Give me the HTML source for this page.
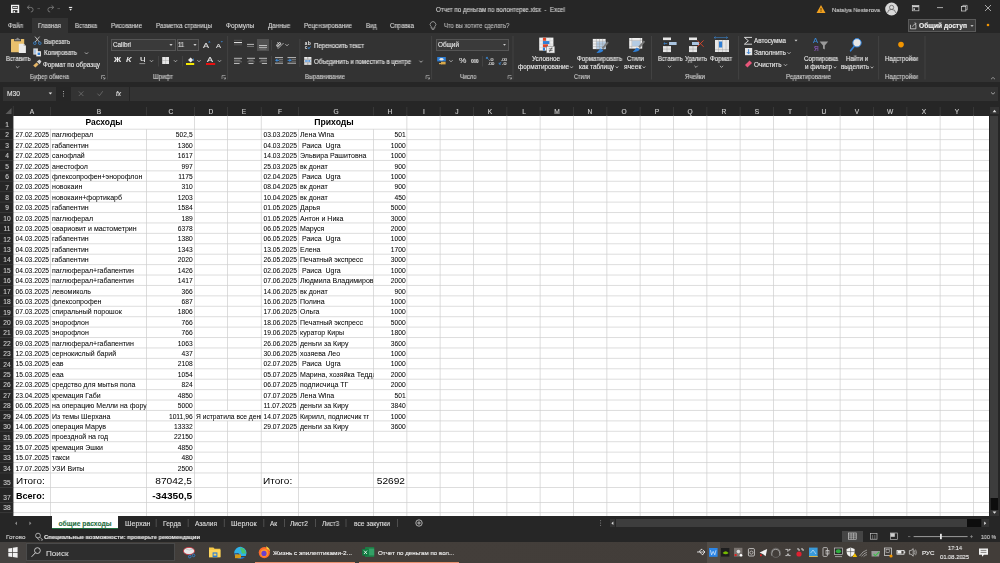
<!DOCTYPE html>
<html><head><meta charset="utf-8"><style>
html,body{margin:0;padding:0;width:1000px;height:563px;overflow:hidden;background:#262626;}
body{position:relative;font-family:"Liberation Sans",sans-serif;}
.t{position:absolute;white-space:nowrap;line-height:1em;}
.g{-webkit-text-stroke:0.04px #000;}
.u{will-change:transform;-webkit-text-stroke:0.12px currentColor;}
.gg{-webkit-text-stroke:0.1px #1e6e3e;}
</style></head><body>
<div style="position:absolute;left:0px;top:0px;width:1000px;height:33px;background:#262626;"></div>
<div style="position:absolute;left:32px;top:18px;width:36px;height:15px;background:#333333;"></div>
<div style="position:absolute;left:0px;top:33px;width:1000px;height:48.7px;background:#333333;"></div>
<div style="position:absolute;left:0px;top:81.7px;width:1000px;height:35px;background:#262626;"></div>
<div class="t u" id="t1" style="top:23px;font-size:6.4px;color:#d6d6d6;left:8px;transform:scaleX(0.9543);transform-origin:left;">Файл</div>
<div class="t u" id="t2" style="top:23px;font-size:6.4px;color:#d6d6d6;left:38px;transform:scaleX(0.9454);transform-origin:left;">Главная</div>
<div class="t u" id="t3" style="top:23px;font-size:6.4px;color:#d6d6d6;left:75px;transform:scaleX(0.9257);transform-origin:left;">Вставка</div>
<div class="t u" id="t4" style="top:23px;font-size:6.4px;color:#d6d6d6;left:111px;transform:scaleX(0.9631);transform-origin:left;">Рисование</div>
<div class="t u" id="t5" style="top:23px;font-size:6.4px;color:#d6d6d6;left:155.6px;transform:scaleX(0.9623);transform-origin:left;">Разметка страницы</div>
<div class="t u" id="t6" style="top:23px;font-size:6.4px;color:#d6d6d6;left:225.7px;transform:scaleX(1.0175);transform-origin:left;">Формулы</div>
<div class="t u" id="t7" style="top:23px;font-size:6.4px;color:#d6d6d6;left:267.6px;transform:scaleX(0.9700);transform-origin:left;">Данные</div>
<div class="t u" id="t8" style="top:23px;font-size:6.4px;color:#d6d6d6;left:304px;transform:scaleX(0.9725);transform-origin:left;">Рецензирование</div>
<div class="t u" id="t9" style="top:23px;font-size:6.4px;color:#d6d6d6;left:365.6px;transform:scaleX(0.9341);transform-origin:left;">Вид</div>
<div class="t u" id="t10" style="top:23px;font-size:6.4px;color:#d6d6d6;left:390px;transform:scaleX(0.9570);transform-origin:left;">Справка</div>
<div class="t u" id="t11" style="top:23px;font-size:6.4px;color:#bdbdbd;left:443.6px;transform:scaleX(0.9256);transform-origin:left;">Что вы хотите сделать?</div>
<div class="t u" id="t12" style="top:7px;font-size:6.4px;color:#d6d6d6;left:435.6px;transform:scaleX(0.9572);transform-origin:left;white-space:pre;">Отчет по деньгам по волонтерке.xlsx  -  Excel</div>
<div class="t u" id="t13" style="top:7px;font-size:6.0px;color:#cfcfcf;left:832px;transform:scaleX(0.9725);transform-origin:left;">Natalya Nesterova</div>
<div style="position:absolute;left:2.6px;top:87px;width:53.4px;height:14px;background:#333333;"></div>
<div class="t u" id="t14" style="top:91px;font-size:6.4px;color:#e0e0e0;left:7px;transform:scaleX(1.0452);transform-origin:left;">M30</div>
<div style="position:absolute;left:71px;top:87px;width:57.6px;height:14px;background:#333333;"></div>
<div style="position:absolute;left:130px;top:87px;width:867.5px;height:14px;background:#333333;"></div>
<div style="position:absolute;left:908px;top:19px;width:68px;height:13px;background:#3b3b3b;box-sizing:border-box;border:0.6px solid #5a5a5a;"></div>
<div class="t u" id="t15" style="top:23px;font-size:6.6px;color:#f2f2f2;font-weight:700;left:919px;transform:scaleX(1.0095);transform-origin:left;">Общий доступ</div>
<div class="t u" id="t16" style="top:56px;font-size:6.3px;color:#e8e8e8;left:5.7px;transform:scaleX(0.9175);transform-origin:left;">Вставить</div>
<div class="t u" id="t17" style="top:39px;font-size:6.3px;color:#e8e8e8;left:44px;transform:scaleX(0.9281);transform-origin:left;">Вырезать</div>
<div class="t u" id="t18" style="top:50px;font-size:6.3px;color:#e8e8e8;left:44px;transform:scaleX(0.9733);transform-origin:left;">Копировать</div>
<div class="t u" id="t19" style="top:62px;font-size:6.3px;color:#e8e8e8;left:43px;transform:scaleX(1.0094);transform-origin:left;">Формат по образцу</div>
<div class="t u" id="t20" style="top:74px;font-size:6.3px;color:#cfcfcf;left:30px;transform:scaleX(0.9113);transform-origin:left;">Буфер обмена</div>
<div style="position:absolute;left:111px;top:39px;width:64.6px;height:11.8px;background:#3a3a3a;box-sizing:border-box;border:0.6px solid #555;"></div>
<div class="t u" id="t21" style="top:42px;font-size:6.3px;color:#e8e8e8;left:113px;transform:scaleX(1.0079);transform-origin:left;">Calibri</div>
<div style="position:absolute;left:176.5px;top:39px;width:22.5px;height:11.8px;background:#3a3a3a;box-sizing:border-box;border:0.6px solid #555;"></div>
<div class="t u" id="t22" style="top:42px;font-size:6.3px;color:#e8e8e8;left:178px;transform:scaleX(0.9165);transform-origin:left;">11</div>
<div class="t u" id="t23" style="top:42px;font-size:7.4px;color:#e0e0e0;left:203px;transform:scaleX(1.2152);transform-origin:left;">A</div>
<div class="t u" id="t24" style="top:44px;font-size:5.8px;color:#e0e0e0;left:216px;transform:scaleX(1.2903);transform-origin:left;">A</div>
<div class="t u" id="t25" style="top:57px;font-size:6.8px;color:#f0f0f0;font-weight:700;left:113.5px;transform:scaleX(1.1371);transform-origin:left;">Ж</div>
<div class="t u" id="t26" style="top:57px;font-size:6.8px;color:#f0f0f0;left:126px;transform:scaleX(1.3696);transform-origin:left;font-style:italic;">К</div>
<div class="t u" id="t27" style="top:57px;font-size:6.8px;color:#f0f0f0;left:139.5px;transform:scaleX(1.2138);transform-origin:left;">Ч</div>
<div class="t u" id="t28" style="top:57px;font-size:6.4px;color:#e6e6e6;left:207px;transform:scaleX(1.4066);transform-origin:left;">A</div>
<div class="t u" id="t29" style="top:74px;font-size:6.3px;color:#cfcfcf;left:153px;transform:scaleX(0.9653);transform-origin:left;">Шрифт</div>
<div style="position:absolute;left:257px;top:39px;width:12.2px;height:12px;background:#505050;"></div>
<div class="t u" id="t30" style="top:43px;font-size:6.3px;color:#e8e8e8;left:314px;transform:scaleX(0.9659);transform-origin:left;">Переносить текст</div>
<div class="t u" id="t31" style="top:59px;font-size:6.3px;color:#e8e8e8;left:314px;transform:scaleX(0.9635);transform-origin:left;">Объединить и поместить в центре</div>
<div class="t u" id="t32" style="top:74px;font-size:6.3px;color:#cfcfcf;left:305px;transform:scaleX(0.9229);transform-origin:left;">Выравнивание</div>
<div style="position:absolute;left:436.2px;top:39px;width:72.8px;height:11.8px;background:#3a3a3a;box-sizing:border-box;border:0.6px solid #555;"></div>
<div class="t u" id="t33" style="top:42px;font-size:6.3px;color:#e8e8e8;left:438px;transform:scaleX(1.0128);transform-origin:left;">Общий</div>
<div class="t u" id="t34" style="top:57px;font-size:7.0px;color:#dcdcdc;left:459px;transform:scaleX(1.1870);transform-origin:left;">%</div>
<div class="t u" id="t35" style="top:59px;font-size:5.2px;color:#dcdcdc;font-weight:700;left:470.6px;transform:scaleX(0.8780);transform-origin:left;">000</div>
<div class="t u" id="t36" style="top:58px;font-size:4.2px;color:#dcdcdc;left:489px;transform:scaleX(1.2857);transform-origin:left;">.0</div>
<div class="t u" id="t37" style="top:62px;font-size:4.2px;color:#dcdcdc;left:488px;transform:scaleX(1.0981);transform-origin:left;">.00</div>
<div class="t u" id="t38" style="top:58px;font-size:4.2px;color:#dcdcdc;left:501px;transform:scaleX(1.0295);transform-origin:left;">.00</div>
<div class="t u" id="t39" style="top:62px;font-size:4.2px;color:#dcdcdc;left:501.8px;transform:scaleX(1.2857);transform-origin:left;">.0</div>
<div class="t u" id="t40" style="top:74px;font-size:6.3px;color:#cfcfcf;left:460px;transform:scaleX(0.9103);transform-origin:left;">Число</div>
<div class="t u" id="t41" style="top:56px;font-size:6.3px;color:#e8e8e8;left:532px;transform:scaleX(1.0067);transform-origin:left;">Условное</div>
<div class="t u" id="t42" style="top:64px;font-size:6.3px;color:#e8e8e8;left:518px;transform:scaleX(1.0087);transform-origin:left;">форматирование</div>
<div class="t u" id="t43" style="top:56px;font-size:6.3px;color:#e8e8e8;left:577px;transform:scaleX(0.9846);transform-origin:left;">Форматировать</div>
<div class="t u" id="t44" style="top:64px;font-size:6.3px;color:#e8e8e8;left:579px;transform:scaleX(1.0145);transform-origin:left;">как таблицу</div>
<div class="t u" id="t45" style="top:56px;font-size:6.3px;color:#e8e8e8;left:627px;transform:scaleX(0.9371);transform-origin:left;">Стили</div>
<div class="t u" id="t46" style="top:64px;font-size:6.3px;color:#e8e8e8;left:624px;transform:scaleX(1.0636);transform-origin:left;">ячеек</div>
<div class="t u" id="t47" style="top:74px;font-size:6.3px;color:#cfcfcf;left:574px;transform:scaleX(0.8820);transform-origin:left;">Стили</div>
<div class="t u" id="t48" style="top:56px;font-size:6.3px;color:#e8e8e8;left:657.5px;transform:scaleX(0.9175);transform-origin:left;">Вставить</div>
<div class="t u" id="t49" style="top:56px;font-size:6.3px;color:#e8e8e8;left:685px;transform:scaleX(0.9149);transform-origin:left;">Удалить</div>
<div class="t u" id="t50" style="top:56px;font-size:6.3px;color:#e8e8e8;left:710px;transform:scaleX(0.9832);transform-origin:left;">Формат</div>
<div class="t u" id="t51" style="top:74px;font-size:6.3px;color:#cfcfcf;left:685px;transform:scaleX(0.9467);transform-origin:left;">Ячейки</div>
<div class="t u" id="t52" style="top:38px;font-size:6.3px;color:#e8e8e8;left:754px;transform:scaleX(0.9966);transform-origin:left;">Автосумма</div>
<div class="t u" id="t53" style="top:50px;font-size:6.3px;color:#e8e8e8;left:754px;transform:scaleX(1.0349);transform-origin:left;">Заполнить</div>
<div class="t u" id="t54" style="top:62px;font-size:6.3px;color:#e8e8e8;left:754px;transform:scaleX(1.0028);transform-origin:left;">Очистить</div>
<div class="t u" id="t55" style="top:38px;font-size:6.8px;color:#3b8ad8;left:813px;transform:scaleX(1.0997);transform-origin:left;">А</div>
<div class="t u" id="t56" style="top:46px;font-size:6.8px;color:#9b5fcf;left:814px;transform:scaleX(0.8940);transform-origin:left;">Я</div>
<div class="t u" id="t57" style="top:56px;font-size:6.3px;color:#e8e8e8;left:804px;transform:scaleX(0.9837);transform-origin:left;">Сортировка</div>
<div class="t u" id="t58" style="top:64px;font-size:6.3px;color:#e8e8e8;left:805px;transform:scaleX(1.0064);transform-origin:left;">и фильтр</div>
<div class="t u" id="t59" style="top:56px;font-size:6.3px;color:#e8e8e8;left:846px;transform:scaleX(0.9462);transform-origin:left;">Найти и</div>
<div class="t u" id="t60" style="top:64px;font-size:6.3px;color:#e8e8e8;left:841px;transform:scaleX(0.9928);transform-origin:left;">выделить</div>
<div class="t u" id="t61" style="top:74px;font-size:6.3px;color:#cfcfcf;left:786px;transform:scaleX(0.9381);transform-origin:left;">Редактирование</div>
<div class="t u" id="t62" style="top:56px;font-size:6.3px;color:#e8e8e8;left:885px;transform:scaleX(0.9548);transform-origin:left;">Надстройки</div>
<div class="t u" id="t63" style="top:74px;font-size:6.3px;color:#cfcfcf;left:885px;transform:scaleX(0.9548);transform-origin:left;">Надстройки</div>
<div class="t u" id="t64" style="top:91px;font-size:6.4px;color:#e0e0e0;left:116px;transform:scaleX(1.0031);transform-origin:left;font-style:italic;font-family:"Liberation Serif",serif;">fx</div>
<div style="position:absolute;left:0px;top:106px;width:989.2px;height:9.6px;background:#262626;"></div>
<div style="position:absolute;left:0px;top:115.6px;width:13.3px;height:400.4px;background:#262626;"></div>
<div style="position:absolute;left:13.3px;top:115.6px;width:975.9000000000001px;height:400.4px;background:#ffffff;"></div>
<svg style="position:absolute;left:0px;top:0px;" width="1000" height="563" viewBox="0 0 1000 563"><g stroke="#cfcfcf" stroke-width="0.7"><line x1="50.5" y1="129.2" x2="50.5" y2="516"/><line x1="146.5" y1="129.2" x2="146.5" y2="516"/><line x1="194.5" y1="115.6" x2="194.5" y2="516"/><line x1="227.5" y1="115.6" x2="227.5" y2="410.46"/><line x1="227.5" y1="420.88" x2="227.5" y2="516"/><line x1="261.3" y1="115.6" x2="261.3" y2="516"/><line x1="298.5" y1="129.2" x2="298.5" y2="516"/><line x1="373.5" y1="129.2" x2="373.5" y2="516"/><line x1="406.83" y1="115.6" x2="406.83" y2="516"/><line x1="440.17" y1="115.6" x2="440.17" y2="516"/><line x1="473.5" y1="115.6" x2="473.5" y2="516"/><line x1="506.83" y1="115.6" x2="506.83" y2="516"/><line x1="540.16" y1="115.6" x2="540.16" y2="516"/><line x1="573.5" y1="115.6" x2="573.5" y2="516"/><line x1="606.83" y1="115.6" x2="606.83" y2="516"/><line x1="640.16" y1="115.6" x2="640.16" y2="516"/><line x1="673.5" y1="115.6" x2="673.5" y2="516"/><line x1="706.83" y1="115.6" x2="706.83" y2="516"/><line x1="740.16" y1="115.6" x2="740.16" y2="516"/><line x1="773.5" y1="115.6" x2="773.5" y2="516"/><line x1="806.83" y1="115.6" x2="806.83" y2="516"/><line x1="840.16" y1="115.6" x2="840.16" y2="516"/><line x1="873.49" y1="115.6" x2="873.49" y2="516"/><line x1="906.83" y1="115.6" x2="906.83" y2="516"/><line x1="940.16" y1="115.6" x2="940.16" y2="516"/><line x1="973.49" y1="115.6" x2="973.49" y2="516"/><line x1="13.3" y1="129.2" x2="989.2" y2="129.2"/><line x1="13.3" y1="139.62" x2="989.2" y2="139.62"/><line x1="13.3" y1="150.03" x2="989.2" y2="150.03"/><line x1="13.3" y1="160.45" x2="989.2" y2="160.45"/><line x1="13.3" y1="170.87" x2="989.2" y2="170.87"/><line x1="13.3" y1="181.28" x2="989.2" y2="181.28"/><line x1="13.3" y1="191.7" x2="989.2" y2="191.7"/><line x1="13.3" y1="202.12" x2="989.2" y2="202.12"/><line x1="13.3" y1="212.54" x2="989.2" y2="212.54"/><line x1="13.3" y1="222.95" x2="989.2" y2="222.95"/><line x1="13.3" y1="233.37" x2="989.2" y2="233.37"/><line x1="13.3" y1="243.79" x2="989.2" y2="243.79"/><line x1="13.3" y1="254.2" x2="989.2" y2="254.2"/><line x1="13.3" y1="264.62" x2="989.2" y2="264.62"/><line x1="13.3" y1="275.04" x2="989.2" y2="275.04"/><line x1="13.3" y1="285.45" x2="989.2" y2="285.45"/><line x1="13.3" y1="295.87" x2="989.2" y2="295.87"/><line x1="13.3" y1="306.29" x2="989.2" y2="306.29"/><line x1="13.3" y1="316.71" x2="989.2" y2="316.71"/><line x1="13.3" y1="327.12" x2="989.2" y2="327.12"/><line x1="13.3" y1="337.54" x2="989.2" y2="337.54"/><line x1="13.3" y1="347.96" x2="989.2" y2="347.96"/><line x1="13.3" y1="358.37" x2="989.2" y2="358.37"/><line x1="13.3" y1="368.79" x2="989.2" y2="368.79"/><line x1="13.3" y1="379.21" x2="989.2" y2="379.21"/><line x1="13.3" y1="389.62" x2="989.2" y2="389.62"/><line x1="13.3" y1="400.04" x2="989.2" y2="400.04"/><line x1="13.3" y1="410.46" x2="989.2" y2="410.46"/><line x1="13.3" y1="420.88" x2="989.2" y2="420.88"/><line x1="13.3" y1="431.29" x2="989.2" y2="431.29"/><line x1="13.3" y1="441.71" x2="989.2" y2="441.71"/><line x1="13.3" y1="452.13" x2="989.2" y2="452.13"/><line x1="13.3" y1="462.54" x2="989.2" y2="462.54"/><line x1="13.3" y1="472.96" x2="989.2" y2="472.96"/><line x1="13.3" y1="487.5" x2="989.2" y2="487.5"/><line x1="13.3" y1="502.5" x2="989.2" y2="502.5"/><line x1="13.3" y1="512.6" x2="989.2" y2="512.6"/></g></svg>
<svg style="position:absolute;left:0px;top:0px;" width="1000" height="563" viewBox="0 0 1000 563"><g stroke="#444" stroke-width="0.6"><line x1="50.5" y1="107" x2="50.5" y2="115.6"/><line x1="146.5" y1="107" x2="146.5" y2="115.6"/><line x1="194.5" y1="107" x2="194.5" y2="115.6"/><line x1="227.5" y1="107" x2="227.5" y2="115.6"/><line x1="261.3" y1="107" x2="261.3" y2="115.6"/><line x1="298.5" y1="107" x2="298.5" y2="115.6"/><line x1="373.5" y1="107" x2="373.5" y2="115.6"/><line x1="406.83" y1="107" x2="406.83" y2="115.6"/><line x1="440.17" y1="107" x2="440.17" y2="115.6"/><line x1="473.5" y1="107" x2="473.5" y2="115.6"/><line x1="506.83" y1="107" x2="506.83" y2="115.6"/><line x1="540.16" y1="107" x2="540.16" y2="115.6"/><line x1="573.5" y1="107" x2="573.5" y2="115.6"/><line x1="606.83" y1="107" x2="606.83" y2="115.6"/><line x1="640.16" y1="107" x2="640.16" y2="115.6"/><line x1="673.5" y1="107" x2="673.5" y2="115.6"/><line x1="706.83" y1="107" x2="706.83" y2="115.6"/><line x1="740.16" y1="107" x2="740.16" y2="115.6"/><line x1="773.5" y1="107" x2="773.5" y2="115.6"/><line x1="806.83" y1="107" x2="806.83" y2="115.6"/><line x1="840.16" y1="107" x2="840.16" y2="115.6"/><line x1="873.49" y1="107" x2="873.49" y2="115.6"/><line x1="906.83" y1="107" x2="906.83" y2="115.6"/><line x1="940.16" y1="107" x2="940.16" y2="115.6"/><line x1="973.49" y1="107" x2="973.49" y2="115.6"/><line x1="0" y1="129.2" x2="13.3" y2="129.2"/><line x1="0" y1="139.62" x2="13.3" y2="139.62"/><line x1="0" y1="150.03" x2="13.3" y2="150.03"/><line x1="0" y1="160.45" x2="13.3" y2="160.45"/><line x1="0" y1="170.87" x2="13.3" y2="170.87"/><line x1="0" y1="181.28" x2="13.3" y2="181.28"/><line x1="0" y1="191.7" x2="13.3" y2="191.7"/><line x1="0" y1="202.12" x2="13.3" y2="202.12"/><line x1="0" y1="212.54" x2="13.3" y2="212.54"/><line x1="0" y1="222.95" x2="13.3" y2="222.95"/><line x1="0" y1="233.37" x2="13.3" y2="233.37"/><line x1="0" y1="243.79" x2="13.3" y2="243.79"/><line x1="0" y1="254.2" x2="13.3" y2="254.2"/><line x1="0" y1="264.62" x2="13.3" y2="264.62"/><line x1="0" y1="275.04" x2="13.3" y2="275.04"/><line x1="0" y1="285.45" x2="13.3" y2="285.45"/><line x1="0" y1="295.87" x2="13.3" y2="295.87"/><line x1="0" y1="306.29" x2="13.3" y2="306.29"/><line x1="0" y1="316.71" x2="13.3" y2="316.71"/><line x1="0" y1="327.12" x2="13.3" y2="327.12"/><line x1="0" y1="337.54" x2="13.3" y2="337.54"/><line x1="0" y1="347.96" x2="13.3" y2="347.96"/><line x1="0" y1="358.37" x2="13.3" y2="358.37"/><line x1="0" y1="368.79" x2="13.3" y2="368.79"/><line x1="0" y1="379.21" x2="13.3" y2="379.21"/><line x1="0" y1="389.62" x2="13.3" y2="389.62"/><line x1="0" y1="400.04" x2="13.3" y2="400.04"/><line x1="0" y1="410.46" x2="13.3" y2="410.46"/><line x1="0" y1="420.88" x2="13.3" y2="420.88"/><line x1="0" y1="431.29" x2="13.3" y2="431.29"/><line x1="0" y1="441.71" x2="13.3" y2="441.71"/><line x1="0" y1="452.13" x2="13.3" y2="452.13"/><line x1="0" y1="462.54" x2="13.3" y2="462.54"/><line x1="0" y1="472.96" x2="13.3" y2="472.96"/><line x1="0" y1="487.5" x2="13.3" y2="487.5"/><line x1="0" y1="502.5" x2="13.3" y2="502.5"/><line x1="0" y1="512.6" x2="13.3" y2="512.6"/><line x1="13.3" y1="106" x2="13.3" y2="516"/></g></svg>
<svg style="position:absolute;left:0px;top:0px;" width="14" height="116" viewBox="0 0 14 116"><path d="M11.5 108 L11.5 114 L5.5 114 Z" fill="#5a5a5a"/></svg>
<div class="t u" id="t65" style="top:109px;font-size:6.6px;color:#cfcfcf;left:31.90px;transform:translateX(-50%) ;">A</div>
<div class="t u" id="t66" style="top:109px;font-size:6.6px;color:#cfcfcf;left:98.50px;transform:translateX(-50%) ;">B</div>
<div class="t u" id="t67" style="top:109px;font-size:6.6px;color:#cfcfcf;left:170.50px;transform:translateX(-50%) ;">C</div>
<div class="t u" id="t68" style="top:109px;font-size:6.6px;color:#cfcfcf;left:211.00px;transform:translateX(-50%) ;">D</div>
<div class="t u" id="t69" style="top:109px;font-size:6.6px;color:#cfcfcf;left:244.40px;transform:translateX(-50%) ;">E</div>
<div class="t u" id="t70" style="top:109px;font-size:6.6px;color:#cfcfcf;left:279.90px;transform:translateX(-50%) ;">F</div>
<div class="t u" id="t71" style="top:109px;font-size:6.6px;color:#cfcfcf;left:336.00px;transform:translateX(-50%) ;">G</div>
<div class="t u" id="t72" style="top:109px;font-size:6.6px;color:#cfcfcf;left:390.16px;transform:translateX(-50%) ;">H</div>
<div class="t u" id="t73" style="top:109px;font-size:6.6px;color:#cfcfcf;left:423.50px;transform:translateX(-50%) ;">I</div>
<div class="t u" id="t74" style="top:109px;font-size:6.6px;color:#cfcfcf;left:456.84px;transform:translateX(-50%) ;">J</div>
<div class="t u" id="t75" style="top:109px;font-size:6.6px;color:#cfcfcf;left:490.16px;transform:translateX(-50%) ;">K</div>
<div class="t u" id="t76" style="top:109px;font-size:6.6px;color:#cfcfcf;left:523.50px;transform:translateX(-50%) ;">L</div>
<div class="t u" id="t77" style="top:109px;font-size:6.6px;color:#cfcfcf;left:556.83px;transform:translateX(-50%) ;">M</div>
<div class="t u" id="t78" style="top:109px;font-size:6.6px;color:#cfcfcf;left:590.16px;transform:translateX(-50%) ;">N</div>
<div class="t u" id="t79" style="top:109px;font-size:6.6px;color:#cfcfcf;left:623.50px;transform:translateX(-50%) ;">O</div>
<div class="t u" id="t80" style="top:109px;font-size:6.6px;color:#cfcfcf;left:656.83px;transform:translateX(-50%) ;">P</div>
<div class="t u" id="t81" style="top:109px;font-size:6.6px;color:#cfcfcf;left:690.16px;transform:translateX(-50%) ;">Q</div>
<div class="t u" id="t82" style="top:109px;font-size:6.6px;color:#cfcfcf;left:723.50px;transform:translateX(-50%) ;">R</div>
<div class="t u" id="t83" style="top:109px;font-size:6.6px;color:#cfcfcf;left:756.83px;transform:translateX(-50%) ;">S</div>
<div class="t u" id="t84" style="top:109px;font-size:6.6px;color:#cfcfcf;left:790.16px;transform:translateX(-50%) ;">T</div>
<div class="t u" id="t85" style="top:109px;font-size:6.6px;color:#cfcfcf;left:823.50px;transform:translateX(-50%) ;">U</div>
<div class="t u" id="t86" style="top:109px;font-size:6.6px;color:#cfcfcf;left:856.83px;transform:translateX(-50%) ;">V</div>
<div class="t u" id="t87" style="top:109px;font-size:6.6px;color:#cfcfcf;left:890.16px;transform:translateX(-50%) ;">W</div>
<div class="t u" id="t88" style="top:109px;font-size:6.6px;color:#cfcfcf;left:923.50px;transform:translateX(-50%) ;">X</div>
<div class="t u" id="t89" style="top:109px;font-size:6.6px;color:#cfcfcf;left:956.83px;transform:translateX(-50%) ;">Y</div>
<div class="t u" id="t90" style="top:122px;font-size:6.6px;color:#c8c8c8;left:6.70px;transform:translateX(-50%) ;">1</div>
<div class="t u" id="t91" style="top:132px;font-size:6.6px;color:#c8c8c8;left:6.70px;transform:translateX(-50%) ;">2</div>
<div class="t u" id="t92" style="top:143px;font-size:6.6px;color:#c8c8c8;left:6.70px;transform:translateX(-50%) ;">3</div>
<div class="t u" id="t93" style="top:153px;font-size:6.6px;color:#c8c8c8;left:6.70px;transform:translateX(-50%) ;">4</div>
<div class="t u" id="t94" style="top:164px;font-size:6.6px;color:#c8c8c8;left:6.70px;transform:translateX(-50%) ;">5</div>
<div class="t u" id="t95" style="top:174px;font-size:6.6px;color:#c8c8c8;left:6.70px;transform:translateX(-50%) ;">6</div>
<div class="t u" id="t96" style="top:185px;font-size:6.6px;color:#c8c8c8;left:6.70px;transform:translateX(-50%) ;">7</div>
<div class="t u" id="t97" style="top:195px;font-size:6.6px;color:#c8c8c8;left:6.70px;transform:translateX(-50%) ;">8</div>
<div class="t u" id="t98" style="top:205px;font-size:6.6px;color:#c8c8c8;left:6.70px;transform:translateX(-50%) ;">9</div>
<div class="t u" id="t99" style="top:216px;font-size:6.6px;color:#c8c8c8;left:6.70px;transform:translateX(-50%) ;">10</div>
<div class="t u" id="t100" style="top:226px;font-size:6.6px;color:#c8c8c8;left:6.70px;transform:translateX(-50%) ;">11</div>
<div class="t u" id="t101" style="top:237px;font-size:6.6px;color:#c8c8c8;left:6.70px;transform:translateX(-50%) ;">12</div>
<div class="t u" id="t102" style="top:247px;font-size:6.6px;color:#c8c8c8;left:6.70px;transform:translateX(-50%) ;">13</div>
<div class="t u" id="t103" style="top:257px;font-size:6.6px;color:#c8c8c8;left:6.70px;transform:translateX(-50%) ;">14</div>
<div class="t u" id="t104" style="top:268px;font-size:6.6px;color:#c8c8c8;left:6.70px;transform:translateX(-50%) ;">15</div>
<div class="t u" id="t105" style="top:278px;font-size:6.6px;color:#c8c8c8;left:6.70px;transform:translateX(-50%) ;">16</div>
<div class="t u" id="t106" style="top:289px;font-size:6.6px;color:#c8c8c8;left:6.70px;transform:translateX(-50%) ;">17</div>
<div class="t u" id="t107" style="top:299px;font-size:6.6px;color:#c8c8c8;left:6.70px;transform:translateX(-50%) ;">18</div>
<div class="t u" id="t108" style="top:310px;font-size:6.6px;color:#c8c8c8;left:6.70px;transform:translateX(-50%) ;">19</div>
<div class="t u" id="t109" style="top:320px;font-size:6.6px;color:#c8c8c8;left:6.70px;transform:translateX(-50%) ;">20</div>
<div class="t u" id="t110" style="top:330px;font-size:6.6px;color:#c8c8c8;left:6.70px;transform:translateX(-50%) ;">21</div>
<div class="t u" id="t111" style="top:341px;font-size:6.6px;color:#c8c8c8;left:6.70px;transform:translateX(-50%) ;">22</div>
<div class="t u" id="t112" style="top:351px;font-size:6.6px;color:#c8c8c8;left:6.70px;transform:translateX(-50%) ;">23</div>
<div class="t u" id="t113" style="top:362px;font-size:6.6px;color:#c8c8c8;left:6.70px;transform:translateX(-50%) ;">24</div>
<div class="t u" id="t114" style="top:372px;font-size:6.6px;color:#c8c8c8;left:6.70px;transform:translateX(-50%) ;">25</div>
<div class="t u" id="t115" style="top:382px;font-size:6.6px;color:#c8c8c8;left:6.70px;transform:translateX(-50%) ;">26</div>
<div class="t u" id="t116" style="top:393px;font-size:6.6px;color:#c8c8c8;left:6.70px;transform:translateX(-50%) ;">27</div>
<div class="t u" id="t117" style="top:403px;font-size:6.6px;color:#c8c8c8;left:6.70px;transform:translateX(-50%) ;">28</div>
<div class="t u" id="t118" style="top:414px;font-size:6.6px;color:#c8c8c8;left:6.70px;transform:translateX(-50%) ;">29</div>
<div class="t u" id="t119" style="top:424px;font-size:6.6px;color:#c8c8c8;left:6.70px;transform:translateX(-50%) ;">30</div>
<div class="t u" id="t120" style="top:435px;font-size:6.6px;color:#c8c8c8;left:6.70px;transform:translateX(-50%) ;">31</div>
<div class="t u" id="t121" style="top:445px;font-size:6.6px;color:#c8c8c8;left:6.70px;transform:translateX(-50%) ;">32</div>
<div class="t u" id="t122" style="top:455px;font-size:6.6px;color:#c8c8c8;left:6.70px;transform:translateX(-50%) ;">33</div>
<div class="t u" id="t123" style="top:466px;font-size:6.6px;color:#c8c8c8;left:6.70px;transform:translateX(-50%) ;">34</div>
<div class="t u" id="t124" style="top:480px;font-size:6.6px;color:#c8c8c8;left:6.70px;transform:translateX(-50%) ;">35</div>
<div class="t u" id="t125" style="top:495px;font-size:6.6px;color:#c8c8c8;left:6.70px;transform:translateX(-50%) ;">37</div>
<div class="t u" id="t126" style="top:505px;font-size:6.6px;color:#c8c8c8;left:6.70px;transform:translateX(-50%) ;">38</div>
<div class="t u" id="t127" style="top:516px;font-size:6.6px;color:#c8c8c8;left:6.70px;transform:translateX(-50%) ;">39</div>
<div class="t g" id="t128" style="top:132px;font-size:6.7px;color:#000;left:15.6px;">27.02.2025</div>
<div class="t g" id="t129" style="top:132px;font-size:6.7px;color:#000;left:52px;transform:scaleX(1.05);transform-origin:left;">паглюферал</div>
<div class="t g" id="t130" style="top:132px;font-size:6.7px;color:#000;right:807.40px;">502,5</div>
<div class="t g" id="t131" style="top:143px;font-size:6.7px;color:#000;left:15.6px;">27.02.2025</div>
<div class="t g" id="t132" style="top:143px;font-size:6.7px;color:#000;left:52px;transform:scaleX(1.05);transform-origin:left;">габапентин</div>
<div class="t g" id="t133" style="top:143px;font-size:6.7px;color:#000;right:807.40px;">1360</div>
<div class="t g" id="t134" style="top:153px;font-size:6.7px;color:#000;left:15.6px;">27.02.2025</div>
<div class="t g" id="t135" style="top:153px;font-size:6.7px;color:#000;left:52px;transform:scaleX(1.05);transform-origin:left;">санофлай</div>
<div class="t g" id="t136" style="top:153px;font-size:6.7px;color:#000;right:807.40px;">1617</div>
<div class="t g" id="t137" style="top:164px;font-size:6.7px;color:#000;left:15.6px;">27.02.2025</div>
<div class="t g" id="t138" style="top:164px;font-size:6.7px;color:#000;left:52px;transform:scaleX(1.05);transform-origin:left;">анестофол</div>
<div class="t g" id="t139" style="top:164px;font-size:6.7px;color:#000;right:807.40px;">997</div>
<div class="t g" id="t140" style="top:174px;font-size:6.7px;color:#000;left:15.6px;">02.03.2025</div>
<div class="t g" id="t141" style="top:174px;font-size:6.7px;color:#000;left:52px;transform:scaleX(1.05);transform-origin:left;">флексопрофен+энорофлон</div>
<div class="t g" id="t142" style="top:174px;font-size:6.7px;color:#000;right:807.40px;">1175</div>
<div class="t g" id="t143" style="top:184px;font-size:6.7px;color:#000;left:15.6px;">02.03.2025</div>
<div class="t g" id="t144" style="top:184px;font-size:6.7px;color:#000;left:52px;transform:scaleX(1.05);transform-origin:left;">новокаин</div>
<div class="t g" id="t145" style="top:184px;font-size:6.7px;color:#000;right:807.40px;">310</div>
<div class="t g" id="t146" style="top:195px;font-size:6.7px;color:#000;left:15.6px;">02.03.2025</div>
<div class="t g" id="t147" style="top:195px;font-size:6.7px;color:#000;left:52px;transform:scaleX(1.05);transform-origin:left;">новокаин+фортикарб</div>
<div class="t g" id="t148" style="top:195px;font-size:6.7px;color:#000;right:807.40px;">1203</div>
<div class="t g" id="t149" style="top:205px;font-size:6.7px;color:#000;left:15.6px;">02.03.2025</div>
<div class="t g" id="t150" style="top:205px;font-size:6.7px;color:#000;left:52px;transform:scaleX(1.05);transform-origin:left;">габапентин</div>
<div class="t g" id="t151" style="top:205px;font-size:6.7px;color:#000;right:807.40px;">1584</div>
<div class="t g" id="t152" style="top:216px;font-size:6.7px;color:#000;left:15.6px;">02.03.2025</div>
<div class="t g" id="t153" style="top:216px;font-size:6.7px;color:#000;left:52px;transform:scaleX(1.05);transform-origin:left;">паглюферал</div>
<div class="t g" id="t154" style="top:216px;font-size:6.7px;color:#000;right:807.40px;">189</div>
<div class="t g" id="t155" style="top:226px;font-size:6.7px;color:#000;left:15.6px;">02.03.2025</div>
<div class="t g" id="t156" style="top:226px;font-size:6.7px;color:#000;left:52px;transform:scaleX(1.05);transform-origin:left;">овариовит и мастометрин</div>
<div class="t g" id="t157" style="top:226px;font-size:6.7px;color:#000;right:807.40px;">6378</div>
<div class="t g" id="t158" style="top:236px;font-size:6.7px;color:#000;left:15.6px;">04.03.2025</div>
<div class="t g" id="t159" style="top:236px;font-size:6.7px;color:#000;left:52px;transform:scaleX(1.05);transform-origin:left;">габапентин</div>
<div class="t g" id="t160" style="top:236px;font-size:6.7px;color:#000;right:807.40px;">1380</div>
<div class="t g" id="t161" style="top:247px;font-size:6.7px;color:#000;left:15.6px;">04.03.2025</div>
<div class="t g" id="t162" style="top:247px;font-size:6.7px;color:#000;left:52px;transform:scaleX(1.05);transform-origin:left;">габапентин</div>
<div class="t g" id="t163" style="top:247px;font-size:6.7px;color:#000;right:807.40px;">1343</div>
<div class="t g" id="t164" style="top:257px;font-size:6.7px;color:#000;left:15.6px;">04.03.2025</div>
<div class="t g" id="t165" style="top:257px;font-size:6.7px;color:#000;left:52px;transform:scaleX(1.05);transform-origin:left;">габапентин</div>
<div class="t g" id="t166" style="top:257px;font-size:6.7px;color:#000;right:807.40px;">2020</div>
<div class="t g" id="t167" style="top:268px;font-size:6.7px;color:#000;left:15.6px;">04.03.2025</div>
<div class="t g" id="t168" style="top:268px;font-size:6.7px;color:#000;left:52px;transform:scaleX(1.05);transform-origin:left;">паглюферал+габапентин</div>
<div class="t g" id="t169" style="top:268px;font-size:6.7px;color:#000;right:807.40px;">1426</div>
<div class="t g" id="t170" style="top:278px;font-size:6.7px;color:#000;left:15.6px;">04.03.2025</div>
<div class="t g" id="t171" style="top:278px;font-size:6.7px;color:#000;left:52px;transform:scaleX(1.05);transform-origin:left;">паглюферал+габапентин</div>
<div class="t g" id="t172" style="top:278px;font-size:6.7px;color:#000;right:807.40px;">1417</div>
<div class="t g" id="t173" style="top:289px;font-size:6.7px;color:#000;left:15.6px;">06.03.2025</div>
<div class="t g" id="t174" style="top:289px;font-size:6.7px;color:#000;left:52px;transform:scaleX(1.05);transform-origin:left;">левомиколь</div>
<div class="t g" id="t175" style="top:289px;font-size:6.7px;color:#000;right:807.40px;">366</div>
<div class="t g" id="t176" style="top:299px;font-size:6.7px;color:#000;left:15.6px;">06.03.2025</div>
<div class="t g" id="t177" style="top:299px;font-size:6.7px;color:#000;left:52px;transform:scaleX(1.05);transform-origin:left;">флексопрофен</div>
<div class="t g" id="t178" style="top:299px;font-size:6.7px;color:#000;right:807.40px;">687</div>
<div class="t g" id="t179" style="top:309px;font-size:6.7px;color:#000;left:15.6px;">07.03.2025</div>
<div class="t g" id="t180" style="top:309px;font-size:6.7px;color:#000;left:52px;transform:scaleX(1.05);transform-origin:left;">спиральный порошок</div>
<div class="t g" id="t181" style="top:309px;font-size:6.7px;color:#000;right:807.40px;">1806</div>
<div class="t g" id="t182" style="top:320px;font-size:6.7px;color:#000;left:15.6px;">09.03.2025</div>
<div class="t g" id="t183" style="top:320px;font-size:6.7px;color:#000;left:52px;transform:scaleX(1.05);transform-origin:left;">энорофлон</div>
<div class="t g" id="t184" style="top:320px;font-size:6.7px;color:#000;right:807.40px;">766</div>
<div class="t g" id="t185" style="top:330px;font-size:6.7px;color:#000;left:15.6px;">09.03.2025</div>
<div class="t g" id="t186" style="top:330px;font-size:6.7px;color:#000;left:52px;transform:scaleX(1.05);transform-origin:left;">энорофлон</div>
<div class="t g" id="t187" style="top:330px;font-size:6.7px;color:#000;right:807.40px;">766</div>
<div class="t g" id="t188" style="top:341px;font-size:6.7px;color:#000;left:15.6px;">09.03.2025</div>
<div class="t g" id="t189" style="top:341px;font-size:6.7px;color:#000;left:52px;transform:scaleX(1.05);transform-origin:left;">паглюферал+габапентин</div>
<div class="t g" id="t190" style="top:341px;font-size:6.7px;color:#000;right:807.40px;">1063</div>
<div class="t g" id="t191" style="top:351px;font-size:6.7px;color:#000;left:15.6px;">12.03.2025</div>
<div class="t g" id="t192" style="top:351px;font-size:6.7px;color:#000;left:52px;transform:scaleX(1.05);transform-origin:left;">сернокислый барий</div>
<div class="t g" id="t193" style="top:351px;font-size:6.7px;color:#000;right:807.40px;">437</div>
<div class="t g" id="t194" style="top:361px;font-size:6.7px;color:#000;left:15.6px;">15.03.2025</div>
<div class="t g" id="t195" style="top:361px;font-size:6.7px;color:#000;left:52px;transform:scaleX(1.05);transform-origin:left;">еав</div>
<div class="t g" id="t196" style="top:361px;font-size:6.7px;color:#000;right:807.40px;">2108</div>
<div class="t g" id="t197" style="top:372px;font-size:6.7px;color:#000;left:15.6px;">15.03.2025</div>
<div class="t g" id="t198" style="top:372px;font-size:6.7px;color:#000;left:52px;transform:scaleX(1.05);transform-origin:left;">еаа</div>
<div class="t g" id="t199" style="top:372px;font-size:6.7px;color:#000;right:807.40px;">1054</div>
<div class="t g" id="t200" style="top:382px;font-size:6.7px;color:#000;left:15.6px;">22.03.2025</div>
<div class="t g" id="t201" style="top:382px;font-size:6.7px;color:#000;left:52px;transform:scaleX(1.05);transform-origin:left;">средство для мытья пола</div>
<div class="t g" id="t202" style="top:382px;font-size:6.7px;color:#000;right:807.40px;">824</div>
<div class="t g" id="t203" style="top:393px;font-size:6.7px;color:#000;left:15.6px;">23.04.2025</div>
<div class="t g" id="t204" style="top:393px;font-size:6.7px;color:#000;left:52px;transform:scaleX(1.05);transform-origin:left;">кремация Габи</div>
<div class="t g" id="t205" style="top:393px;font-size:6.7px;color:#000;right:807.40px;">4850</div>
<div class="t g" id="t206" style="top:403px;font-size:6.7px;color:#000;left:15.6px;">06.05.2025</div>
<div class="t g" id="t207" style="top:403px;font-size:6.7px;color:#000;left:52px;width:90.00px;overflow:hidden;transform:scaleX(1.05);transform-origin:left;">на операцию Мелли на форум</div>
<div class="t g" id="t208" style="top:403px;font-size:6.7px;color:#000;right:807.40px;">5000</div>
<div class="t g" id="t209" style="top:414px;font-size:6.7px;color:#000;left:15.6px;">24.05.2025</div>
<div class="t g" id="t210" style="top:414px;font-size:6.7px;color:#000;left:52px;transform:scaleX(1.05);transform-origin:left;">Из темы Шерхана</div>
<div class="t g" id="t211" style="top:414px;font-size:6.7px;color:#000;right:807.40px;">1011,96</div>
<div class="t g" id="t212" style="top:424px;font-size:6.7px;color:#000;left:15.6px;">14.06.2025</div>
<div class="t g" id="t213" style="top:424px;font-size:6.7px;color:#000;left:52px;transform:scaleX(1.05);transform-origin:left;">операция Марув</div>
<div class="t g" id="t214" style="top:424px;font-size:6.7px;color:#000;right:807.40px;">13332</div>
<div class="t g" id="t215" style="top:434px;font-size:6.7px;color:#000;left:15.6px;">29.05.2025</div>
<div class="t g" id="t216" style="top:434px;font-size:6.7px;color:#000;left:52px;transform:scaleX(1.05);transform-origin:left;">проездной на год</div>
<div class="t g" id="t217" style="top:434px;font-size:6.7px;color:#000;right:807.40px;">22150</div>
<div class="t g" id="t218" style="top:445px;font-size:6.7px;color:#000;left:15.6px;">15.07.2025</div>
<div class="t g" id="t219" style="top:445px;font-size:6.7px;color:#000;left:52px;transform:scaleX(1.05);transform-origin:left;">кремация Эшки</div>
<div class="t g" id="t220" style="top:445px;font-size:6.7px;color:#000;right:807.40px;">4850</div>
<div class="t g" id="t221" style="top:455px;font-size:6.7px;color:#000;left:15.6px;">15.07.2025</div>
<div class="t g" id="t222" style="top:455px;font-size:6.7px;color:#000;left:52px;transform:scaleX(1.05);transform-origin:left;">такси</div>
<div class="t g" id="t223" style="top:455px;font-size:6.7px;color:#000;right:807.40px;">480</div>
<div class="t g" id="t224" style="top:466px;font-size:6.7px;color:#000;left:15.6px;">17.07.2025</div>
<div class="t g" id="t225" style="top:466px;font-size:6.7px;color:#000;left:52px;transform:scaleX(1.05);transform-origin:left;">УЗИ Виты</div>
<div class="t g" id="t226" style="top:466px;font-size:6.7px;color:#000;right:807.40px;">2500</div>
<div class="t g" id="t227" style="top:132px;font-size:6.7px;color:#000;left:263.5px;">03.03.2025</div>
<div class="t g" id="t228" style="top:132px;font-size:6.7px;color:#000;left:299.6px;width:69.5px;overflow:hidden;white-space:pre;transform:scaleX(1.05);transform-origin:left;">Лена Wina</div>
<div class="t g" id="t229" style="top:132px;font-size:6.7px;color:#000;right:594.40px;">501</div>
<div class="t g" id="t230" style="top:143px;font-size:6.7px;color:#000;left:263.5px;">04.03.2025</div>
<div class="t g" id="t231" style="top:143px;font-size:6.7px;color:#000;left:299.6px;width:69.5px;overflow:hidden;white-space:pre;transform:scaleX(1.05);transform-origin:left;"> Раиса  Ugra</div>
<div class="t g" id="t232" style="top:143px;font-size:6.7px;color:#000;right:594.40px;">1000</div>
<div class="t g" id="t233" style="top:153px;font-size:6.7px;color:#000;left:263.5px;">14.03.2025</div>
<div class="t g" id="t234" style="top:153px;font-size:6.7px;color:#000;left:299.6px;width:69.5px;overflow:hidden;white-space:pre;transform:scaleX(1.05);transform-origin:left;">Эльвира Рашитовна</div>
<div class="t g" id="t235" style="top:153px;font-size:6.7px;color:#000;right:594.40px;">1000</div>
<div class="t g" id="t236" style="top:164px;font-size:6.7px;color:#000;left:263.5px;">25.03.2025</div>
<div class="t g" id="t237" style="top:164px;font-size:6.7px;color:#000;left:299.6px;width:69.5px;overflow:hidden;white-space:pre;transform:scaleX(1.05);transform-origin:left;">вк донат</div>
<div class="t g" id="t238" style="top:164px;font-size:6.7px;color:#000;right:594.40px;">900</div>
<div class="t g" id="t239" style="top:174px;font-size:6.7px;color:#000;left:263.5px;">02.04.2025</div>
<div class="t g" id="t240" style="top:174px;font-size:6.7px;color:#000;left:299.6px;width:69.5px;overflow:hidden;white-space:pre;transform:scaleX(1.05);transform-origin:left;"> Раиса  Ugra</div>
<div class="t g" id="t241" style="top:174px;font-size:6.7px;color:#000;right:594.40px;">1000</div>
<div class="t g" id="t242" style="top:184px;font-size:6.7px;color:#000;left:263.5px;">08.04.2025</div>
<div class="t g" id="t243" style="top:184px;font-size:6.7px;color:#000;left:299.6px;width:69.5px;overflow:hidden;white-space:pre;transform:scaleX(1.05);transform-origin:left;">вк донат</div>
<div class="t g" id="t244" style="top:184px;font-size:6.7px;color:#000;right:594.40px;">900</div>
<div class="t g" id="t245" style="top:195px;font-size:6.7px;color:#000;left:263.5px;">10.04.2025</div>
<div class="t g" id="t246" style="top:195px;font-size:6.7px;color:#000;left:299.6px;width:69.5px;overflow:hidden;white-space:pre;transform:scaleX(1.05);transform-origin:left;">вк донат</div>
<div class="t g" id="t247" style="top:195px;font-size:6.7px;color:#000;right:594.40px;">450</div>
<div class="t g" id="t248" style="top:205px;font-size:6.7px;color:#000;left:263.5px;">01.05.2025</div>
<div class="t g" id="t249" style="top:205px;font-size:6.7px;color:#000;left:299.6px;width:69.5px;overflow:hidden;white-space:pre;transform:scaleX(1.05);transform-origin:left;">Дарья</div>
<div class="t g" id="t250" style="top:205px;font-size:6.7px;color:#000;right:594.40px;">5000</div>
<div class="t g" id="t251" style="top:216px;font-size:6.7px;color:#000;left:263.5px;">01.05.2025</div>
<div class="t g" id="t252" style="top:216px;font-size:6.7px;color:#000;left:299.6px;width:69.5px;overflow:hidden;white-space:pre;transform:scaleX(1.05);transform-origin:left;">Антон и Ника</div>
<div class="t g" id="t253" style="top:216px;font-size:6.7px;color:#000;right:594.40px;">3000</div>
<div class="t g" id="t254" style="top:226px;font-size:6.7px;color:#000;left:263.5px;">06.05.2025</div>
<div class="t g" id="t255" style="top:226px;font-size:6.7px;color:#000;left:299.6px;width:69.5px;overflow:hidden;white-space:pre;transform:scaleX(1.05);transform-origin:left;">Маруся</div>
<div class="t g" id="t256" style="top:226px;font-size:6.7px;color:#000;right:594.40px;">2000</div>
<div class="t g" id="t257" style="top:236px;font-size:6.7px;color:#000;left:263.5px;">06.05.2025</div>
<div class="t g" id="t258" style="top:236px;font-size:6.7px;color:#000;left:299.6px;width:69.5px;overflow:hidden;white-space:pre;transform:scaleX(1.05);transform-origin:left;"> Раиса  Ugra</div>
<div class="t g" id="t259" style="top:236px;font-size:6.7px;color:#000;right:594.40px;">1000</div>
<div class="t g" id="t260" style="top:247px;font-size:6.7px;color:#000;left:263.5px;">13.05.2025</div>
<div class="t g" id="t261" style="top:247px;font-size:6.7px;color:#000;left:299.6px;width:69.5px;overflow:hidden;white-space:pre;transform:scaleX(1.05);transform-origin:left;">Елена</div>
<div class="t g" id="t262" style="top:247px;font-size:6.7px;color:#000;right:594.40px;">1700</div>
<div class="t g" id="t263" style="top:257px;font-size:6.7px;color:#000;left:263.5px;">26.05.2025</div>
<div class="t g" id="t264" style="top:257px;font-size:6.7px;color:#000;left:299.6px;width:69.5px;overflow:hidden;white-space:pre;transform:scaleX(1.05);transform-origin:left;">Печатный экспресс</div>
<div class="t g" id="t265" style="top:257px;font-size:6.7px;color:#000;right:594.40px;">3000</div>
<div class="t g" id="t266" style="top:268px;font-size:6.7px;color:#000;left:263.5px;">02.06.2025</div>
<div class="t g" id="t267" style="top:268px;font-size:6.7px;color:#000;left:299.6px;width:69.5px;overflow:hidden;white-space:pre;transform:scaleX(1.05);transform-origin:left;"> Раиса  Ugra</div>
<div class="t g" id="t268" style="top:268px;font-size:6.7px;color:#000;right:594.40px;">1000</div>
<div class="t g" id="t269" style="top:278px;font-size:6.7px;color:#000;left:263.5px;">07.06.2025</div>
<div class="t g" id="t270" style="top:278px;font-size:6.7px;color:#000;left:299.6px;width:69.5px;overflow:hidden;white-space:pre;transform:scaleX(1.05);transform-origin:left;">Людмила Владимировна</div>
<div class="t g" id="t271" style="top:278px;font-size:6.7px;color:#000;right:594.40px;">2000</div>
<div class="t g" id="t272" style="top:289px;font-size:6.7px;color:#000;left:263.5px;">14.06.2025</div>
<div class="t g" id="t273" style="top:289px;font-size:6.7px;color:#000;left:299.6px;width:69.5px;overflow:hidden;white-space:pre;transform:scaleX(1.05);transform-origin:left;">вк донат</div>
<div class="t g" id="t274" style="top:289px;font-size:6.7px;color:#000;right:594.40px;">900</div>
<div class="t g" id="t275" style="top:299px;font-size:6.7px;color:#000;left:263.5px;">16.06.2025</div>
<div class="t g" id="t276" style="top:299px;font-size:6.7px;color:#000;left:299.6px;width:69.5px;overflow:hidden;white-space:pre;transform:scaleX(1.05);transform-origin:left;">Полина</div>
<div class="t g" id="t277" style="top:299px;font-size:6.7px;color:#000;right:594.40px;">1000</div>
<div class="t g" id="t278" style="top:309px;font-size:6.7px;color:#000;left:263.5px;">17.06.2025</div>
<div class="t g" id="t279" style="top:309px;font-size:6.7px;color:#000;left:299.6px;width:69.5px;overflow:hidden;white-space:pre;transform:scaleX(1.05);transform-origin:left;">Ольга</div>
<div class="t g" id="t280" style="top:309px;font-size:6.7px;color:#000;right:594.40px;">1000</div>
<div class="t g" id="t281" style="top:320px;font-size:6.7px;color:#000;left:263.5px;">18.06.2025</div>
<div class="t g" id="t282" style="top:320px;font-size:6.7px;color:#000;left:299.6px;width:69.5px;overflow:hidden;white-space:pre;transform:scaleX(1.05);transform-origin:left;">Печатный экспресс</div>
<div class="t g" id="t283" style="top:320px;font-size:6.7px;color:#000;right:594.40px;">5000</div>
<div class="t g" id="t284" style="top:330px;font-size:6.7px;color:#000;left:263.5px;">19.06.2025</div>
<div class="t g" id="t285" style="top:330px;font-size:6.7px;color:#000;left:299.6px;width:69.5px;overflow:hidden;white-space:pre;transform:scaleX(1.05);transform-origin:left;">куратор Киры</div>
<div class="t g" id="t286" style="top:330px;font-size:6.7px;color:#000;right:594.40px;">1800</div>
<div class="t g" id="t287" style="top:341px;font-size:6.7px;color:#000;left:263.5px;">26.06.2025</div>
<div class="t g" id="t288" style="top:341px;font-size:6.7px;color:#000;left:299.6px;width:69.5px;overflow:hidden;white-space:pre;transform:scaleX(1.05);transform-origin:left;">деньги за Киру</div>
<div class="t g" id="t289" style="top:341px;font-size:6.7px;color:#000;right:594.40px;">3600</div>
<div class="t g" id="t290" style="top:351px;font-size:6.7px;color:#000;left:263.5px;">30.06.2025</div>
<div class="t g" id="t291" style="top:351px;font-size:6.7px;color:#000;left:299.6px;width:69.5px;overflow:hidden;white-space:pre;transform:scaleX(1.05);transform-origin:left;">хозяева Лео</div>
<div class="t g" id="t292" style="top:351px;font-size:6.7px;color:#000;right:594.40px;">1000</div>
<div class="t g" id="t293" style="top:361px;font-size:6.7px;color:#000;left:263.5px;">02.07.2025</div>
<div class="t g" id="t294" style="top:361px;font-size:6.7px;color:#000;left:299.6px;width:69.5px;overflow:hidden;white-space:pre;transform:scaleX(1.05);transform-origin:left;"> Раиса  Ugra</div>
<div class="t g" id="t295" style="top:361px;font-size:6.7px;color:#000;right:594.40px;">1000</div>
<div class="t g" id="t296" style="top:372px;font-size:6.7px;color:#000;left:263.5px;">05.07.2025</div>
<div class="t g" id="t297" style="top:372px;font-size:6.7px;color:#000;left:299.6px;width:69.5px;overflow:hidden;white-space:pre;transform:scaleX(1.05);transform-origin:left;">Марина, хозяйка Тедди</div>
<div class="t g" id="t298" style="top:372px;font-size:6.7px;color:#000;right:594.40px;">2000</div>
<div class="t g" id="t299" style="top:382px;font-size:6.7px;color:#000;left:263.5px;">06.07.2025</div>
<div class="t g" id="t300" style="top:382px;font-size:6.7px;color:#000;left:299.6px;width:69.5px;overflow:hidden;white-space:pre;transform:scaleX(1.05);transform-origin:left;">подписчица ТГ</div>
<div class="t g" id="t301" style="top:382px;font-size:6.7px;color:#000;right:594.40px;">2000</div>
<div class="t g" id="t302" style="top:393px;font-size:6.7px;color:#000;left:263.5px;">07.07.2025</div>
<div class="t g" id="t303" style="top:393px;font-size:6.7px;color:#000;left:299.6px;width:69.5px;overflow:hidden;white-space:pre;transform:scaleX(1.05);transform-origin:left;">Лена Wina</div>
<div class="t g" id="t304" style="top:393px;font-size:6.7px;color:#000;right:594.40px;">501</div>
<div class="t g" id="t305" style="top:403px;font-size:6.7px;color:#000;left:263.5px;">11.07.2025</div>
<div class="t g" id="t306" style="top:403px;font-size:6.7px;color:#000;left:299.6px;width:69.5px;overflow:hidden;white-space:pre;transform:scaleX(1.05);transform-origin:left;">деньги за Киру</div>
<div class="t g" id="t307" style="top:403px;font-size:6.7px;color:#000;right:594.40px;">3840</div>
<div class="t g" id="t308" style="top:414px;font-size:6.7px;color:#000;left:263.5px;">14.07.2025</div>
<div class="t g" id="t309" style="top:414px;font-size:6.7px;color:#000;left:299.6px;width:69.5px;overflow:hidden;white-space:pre;transform:scaleX(1.05);transform-origin:left;">Кирилл, подписчик тг</div>
<div class="t g" id="t310" style="top:414px;font-size:6.7px;color:#000;right:594.40px;">1000</div>
<div class="t g" id="t311" style="top:424px;font-size:6.7px;color:#000;left:263.5px;">29.07.2025</div>
<div class="t g" id="t312" style="top:424px;font-size:6.7px;color:#000;left:299.6px;width:69.5px;overflow:hidden;white-space:pre;transform:scaleX(1.05);transform-origin:left;">деньги за Киру</div>
<div class="t g" id="t313" style="top:424px;font-size:6.7px;color:#000;right:594.40px;">3600</div>
<div class="t g" id="t314" style="top:414px;font-size:6.7px;color:#000;left:196px;width:65px;overflow:hidden;transform:scaleX(1.0);transform-origin:left;">Я истратила все деньги</div>
<div class="t " id="t315" style="top:117px;font-size:9.4px;color:#000;font-weight:700;left:103.90px;transform:translateX(-50%) scaleX(0.9028);transform-origin:center;">Расходы</div>
<div class="t " id="t316" style="top:117px;font-size:9.4px;color:#000;font-weight:700;left:334.00px;transform:translateX(-50%) scaleX(0.9233);transform-origin:center;">Приходы</div>
<div class="t " id="t317" style="top:476px;font-size:9.7px;color:#000;left:15.7px;transform:scaleX(1.0251);transform-origin:left;">Итого:</div>
<div class="t " id="t318" style="top:476px;font-size:9.7px;color:#000;right:807.60px;transform:scaleX(1.0505);transform-origin:right;">87042,5</div>
<div class="t " id="t319" style="top:491px;font-size:9.7px;color:#000;font-weight:700;left:15.7px;transform:scaleX(0.9342);transform-origin:left;">Всего:</div>
<div class="t " id="t320" style="top:491px;font-size:9.7px;color:#000;font-weight:700;right:807.60px;transform:scaleX(1.0458);transform-origin:right;">-34350,5</div>
<div class="t " id="t321" style="top:476px;font-size:9.7px;color:#000;left:263.3px;transform:scaleX(1.0394);transform-origin:left;">Итого:</div>
<div class="t " id="t322" style="top:476px;font-size:9.7px;color:#000;right:595.20px;transform:scaleX(1.0463);transform-origin:right;">52692</div>
<div style="position:absolute;left:0px;top:516px;width:1000px;height:13px;background:#262626;"></div>
<div style="position:absolute;left:989.2px;top:106px;width:10.8px;height:410px;background:#262626;"></div>
<div style="position:absolute;left:990.2px;top:115.5px;width:8.3px;height:382.5px;background:#3d3d3d;"></div>
<div style="position:absolute;left:990.6px;top:498px;width:7.6px;height:11.5px;background:#0d0d0d;"></div>
<div style="position:absolute;left:990.4px;top:107px;width:8.2px;height:7.4px;background:#333333;"></div>
<div style="position:absolute;left:990.4px;top:509.6px;width:8.2px;height:6.2px;background:#333333;"></div>
<div style="position:absolute;left:52px;top:516px;width:66px;height:12.5px;background:#ffffff;"></div>
<div style="position:absolute;left:52px;top:527.5px;width:66px;height:1.1px;background:#1e6e3e;"></div>
<div class="t gg" id="t323" style="top:521px;font-size:6.6px;color:#1e6e3e;font-weight:700;left:85.00px;transform:translateX(-50%) scaleX(1.0238);transform-origin:center;">общие расходы</div>
<div class="t u" id="t324" style="top:521px;font-size:6.4px;color:#dcdcdc;left:124.5px;transform:scaleX(1.1034);transform-origin:left;">Шерхан</div>
<div class="t u" id="t325" style="top:521px;font-size:6.4px;color:#dcdcdc;left:163px;transform:scaleX(1.0416);transform-origin:left;">Герда</div>
<div class="t u" id="t326" style="top:521px;font-size:6.4px;color:#dcdcdc;left:195px;transform:scaleX(1.0225);transform-origin:left;">Азалия</div>
<div class="t u" id="t327" style="top:521px;font-size:6.4px;color:#dcdcdc;left:230.5px;transform:scaleX(1.1132);transform-origin:left;">Шерлок</div>
<div class="t u" id="t328" style="top:521px;font-size:6.4px;color:#dcdcdc;left:270px;transform:scaleX(0.9912);transform-origin:left;">Ак</div>
<div class="t u" id="t329" style="top:521px;font-size:6.4px;color:#dcdcdc;left:290px;transform:scaleX(1.0313);transform-origin:left;">Лист2</div>
<div class="t u" id="t330" style="top:521px;font-size:6.4px;color:#dcdcdc;left:322px;transform:scaleX(0.9740);transform-origin:left;">Лист3</div>
<div class="t u" id="t331" style="top:521px;font-size:6.4px;color:#dcdcdc;left:354px;transform:scaleX(1.0516);transform-origin:left;">все закупки</div>
<div style="position:absolute;left:609.8px;top:518.6px;width:380px;height:9px;background:#262626;"></div>
<div style="position:absolute;left:615.6px;top:519.2px;width:351.4px;height:8px;background:#3d3d3d;"></div>
<div style="position:absolute;left:967px;top:519.2px;width:14px;height:8px;background:#0d0d0d;"></div>
<div style="position:absolute;left:609.8px;top:519.2px;width:5.6px;height:8px;background:#333333;"></div>
<div style="position:absolute;left:981.6px;top:519.2px;width:7.4px;height:8px;background:#333333;"></div>
<div style="position:absolute;left:0px;top:529px;width:1000px;height:12.6px;background:#262626;"></div>
<div class="t u" id="t332" style="top:534px;font-size:6.0px;color:#cfcfcf;left:5.5px;transform:scaleX(1.0523);transform-origin:left;">Готово</div>
<div class="t u" id="t333" style="top:534px;font-size:6.0px;color:#e8e8e8;font-weight:700;left:44px;transform:scaleX(0.9622);transform-origin:left;">Специальные возможности: проверьте рекомендации</div>
<div style="position:absolute;left:842px;top:530.6px;width:21.4px;height:11px;background:#454545;"></div>
<div class="t u" id="t334" style="top:534px;font-size:6.0px;color:#cfcfcf;left:981px;transform:scaleX(0.8815);transform-origin:left;">100 %</div>
<div style="position:absolute;left:0;top:541.6px;width:1000px;height:21.4px;background:linear-gradient(90deg,#403d3a 0%,#433e3a 40%,#423d39 100%)"></div>
<div style="position:absolute;left:0px;top:541.6px;width:25.6px;height:21.4px;background:#454240;"></div>
<div style="position:absolute;left:25.8px;top:542.8px;width:148.8px;height:18.6px;background:#2d2d2d;box-sizing:border-box;border:0.6px solid #4a4a4a;"></div>
<div class="t u" id="t335" style="top:550px;font-size:7.2px;color:#d6d6d6;left:45.5px;transform:scaleX(1.1294);transform-origin:left;">Поиск</div>
<div class="t u" id="t336" style="top:550px;font-size:6.2px;color:#f2f2f2;left:273px;transform:scaleX(1.0327);transform-origin:left;">Жизнь с эпилептиками-2...</div>
<div style="position:absolute;left:255px;top:561.6px;width:100px;height:1.4px;background:#e98f6d;"></div>
<div class="t u" id="t337" style="top:550px;font-size:6.2px;color:#f2f2f2;left:377.5px;transform:scaleX(0.9973);transform-origin:left;">Отчет по деньгам по вол...</div>
<div style="position:absolute;left:359px;top:561.6px;width:100px;height:1.4px;background:#e98f6d;"></div>
<div style="position:absolute;left:707px;top:541.6px;width:13px;height:21.4px;background:#524d48;"></div>
<div class="t u" id="t338" style="top:550px;font-size:6.2px;color:#f2f2f2;left:922px;transform:scaleX(1.0088);transform-origin:left;">РУС</div>
<div class="t u" id="t339" style="top:545px;font-size:6.2px;color:#f2f2f2;left:948px;transform:scaleX(0.9041);transform-origin:left;">17:14</div>
<div class="t u" id="t340" style="top:554px;font-size:6.2px;color:#f2f2f2;left:940px;transform:scaleX(0.9364);transform-origin:left;">01.08.2025</div>
<svg style="position:absolute;left:0;top:0" width="1000" height="563"><rect x="11" y="4.8" width="8.2" height="8.2" fill="#f2f2f2"/><rect x="12.4" y="6" width="5.4" height="2.8" fill="#262626"/><rect x="12.9" y="6.8" width="4.4" height="1.1" fill="#f2f2f2"/><rect x="12.8" y="10.2" width="4.6" height="2.4" fill="#262626"/><rect x="13.6" y="11" width="1.4" height="1.6" fill="#f2f2f2"/><path d="M27.4 7.4 h3.4 a2.3 2.3 0 0 1 0 4.6 M29.4 5.4 L27.2 7.4 L29.4 9.4" stroke="#7a7a7a" stroke-width="0.9" fill="none"/><line x1="37.4" y1="8.6" x2="40" y2="8.6" stroke="#6a6a6a" stroke-width="0.7"/><path d="M53.6 7.4 h-3.4 a2.3 2.3 0 0 0 0 4.6 M51.6 5.4 L53.8 7.4 L51.6 9.4" stroke="#7a7a7a" stroke-width="0.9" fill="none"/><line x1="57.4" y1="8.6" x2="60" y2="8.6" stroke="#6a6a6a" stroke-width="0.7"/><rect x="68.9" y="6.9" width="3.3" height="1.2" fill="#e6e6e6"/><path d="M69.3 9 h2.6 l-1.3 1.8z" fill="#e6e6e6"/><path d="M821 5 L825.5 13 L816.5 13 Z" fill="#f0a020"/><rect x="820.6" y="8" width="0.8" height="2.6" fill="#3a2a00"/><rect x="820.6" y="11.2" width="0.8" height="0.8" fill="#3a2a00"/><circle cx="891.6" cy="9" r="6.4" fill="#d9d9d9"/><circle cx="891.6" cy="7.4" r="2.1" fill="none" stroke="#555" stroke-width="0.7"/><path d="M887.6 12.8 a4 3.4 0 0 1 8 0" fill="none" stroke="#555" stroke-width="0.7"/><rect x="912.3" y="5.6" width="6.6" height="5.2" fill="none" stroke="#cfcfcf" stroke-width="0.7"/><rect x="912.3" y="5.6" width="6.6" height="1.6" fill="#cfcfcf"/><rect x="913.4" y="8.3" width="1.6" height="1.6" fill="#cfcfcf"/><line x1="937" y1="7.6" x2="943" y2="7.6" stroke="#e0e0e0" stroke-width="0.7"/><rect x="961.4" y="6.6" width="4.4" height="4.4" fill="none" stroke="#e0e0e0" stroke-width="0.7"/><path d="M962.8 6.6 v-1.2 h4.4 v4.4 h-1.4" fill="none" stroke="#e0e0e0" stroke-width="0.6"/><path d="M985 5 L991 11 M991 5 L985 11" stroke="#e0e0e0" stroke-width="0.7"/><path d="M910.5 24.8 v4 h5.4 v-4" fill="none" stroke="#e6e6e6" stroke-width="0.7"/><path d="M912.5 26.8 q1 -3 3.5 -3.2 M914.6 22.6 l1.6 1 l-1 1.5" fill="none" stroke="#e6e6e6" stroke-width="0.6"/><path d="M970.4 25.1 L973.6 25.1 L972 27.0 Z" fill="#bdbdbd"/><circle cx="988" cy="25" r="1.3" fill="#f29500"/><path d="M431.2 26.6 a2.8 2.8 0 1 1 3.6 0 v1.6 h-3.6 z M431.8 29.4 h2.4" fill="none" stroke="#d0d0d0" stroke-width="0.6"/><rect x="11" y="39" width="13.2" height="13.3" rx="0.6" fill="#e9c06d"/><rect x="14.2" y="38.6" width="6.8" height="2.6" fill="#333"/><path d="M14.8 40.6 h5.6 v-1.6 h-1.6 a1 1 0 0 0 -2.4 0 h-1.6 z" fill="#8a8a8a"/><path d="M18.8 43.7 h4.9 l2.2 2.2 v7 h-7.1 z" fill="#ececec"/><path d="M23.7 43.7 v2.2 h2.2" fill="#bdbdbd"/><path d="M15.9 66.3 L17.5 67.89999999999999 L19.1 66.3" stroke="#d0d0d0" stroke-width="0.75" fill="none"/><path d="M35 36.6 L39.4 42 M39.6 36.6 L35.2 42" stroke="#d9d9d9" stroke-width="0.8"/><circle cx="34.8" cy="43.2" r="1.3" fill="none" stroke="#3b8ad8" stroke-width="0.8"/><circle cx="39.8" cy="43.2" r="1.3" fill="none" stroke="#3b8ad8" stroke-width="0.8"/><rect x="33.3" y="48.4" width="4.6" height="6.2" fill="#dcdcdc"/><rect x="36.3" y="51.2" width="4.6" height="5.2" fill="#eeeeee"/><rect x="37.6" y="52.6" width="2.4" height="2.4" fill="#2f7fd6"/><rect x="34.3" y="49.6" width="1.4" height="4" fill="#8fb8e8"/><path d="M84.9 52.400000000000006 L86.5 54.0 L88.1 52.400000000000006" stroke="#d0d0d0" stroke-width="0.75" fill="none"/><path d="M33.2 65.6 L36.6 62.4 L38.6 64.4 L35.4 67.6 Z" fill="#e3b466"/><path d="M36.8 61.4 L39.6 59.6 L41.4 61.4 L39.6 64.2 Z" fill="#cfcfcf"/><path d="M101.5 79.0 L101.5 75.5 L105.0 75.5 M102.7 76.7 L105.0 79.0 M105.0 77.3 L105.0 79.0 L103.3 79.0" stroke="#bdbdbd" stroke-width="0.6" fill="none"/><line x1="107.5" y1="36" x2="107.5" y2="79.5" stroke="#4d4d4d" stroke-width="0.6"/><path d="M169.4 44.1 L172.6 44.1 L171 46.0 Z" fill="#cfcfcf"/><path d="M193.4 44.1 L196.6 44.1 L195 46.0 Z" fill="#cfcfcf"/><path d="M208 42.6 L209.3 41 L210.6 42.6 Z" fill="#3b8ad8"/><path d="M220.6 41.2 L223 41.2 L221.8 42.6 Z" fill="#3b8ad8"/><line x1="139.4" y1="63.6" x2="145.2" y2="63.6" stroke="#cfcfcf" stroke-width="0.6"/><path d="M149.9 60.2 L151.5 61.8 L153.1 60.2" stroke="#d0d0d0" stroke-width="0.75" fill="none"/><line x1="158.5" y1="56" x2="158.5" y2="66.5" stroke="#4d4d4d" stroke-width="0.6"/><rect x="162.2" y="57" width="6.8" height="7" fill="#e6e6e6"/><path d="M165.6 57 v7 M162.2 60.5 h6.8" stroke="#9a9a9a" stroke-width="0.4"/><path d="M173.9 60.2 L175.5 61.8 L177.1 60.2" stroke="#d0d0d0" stroke-width="0.75" fill="none"/><line x1="182.5" y1="56" x2="182.5" y2="66.5" stroke="#4d4d4d" stroke-width="0.6"/><path d="M188 60 l2.6 -2.6 l2.6 2.6 l-2.6 2.4 z" fill="#e6e6e6"/><path d="M193.4 58.6 v2.4" stroke="#3b8ad8" stroke-width="0.9"/><rect x="186" y="63" width="8.2" height="2" fill="#f4e800"/><path d="M197.4 60.2 L199 61.8 L200.6 60.2" stroke="#d0d0d0" stroke-width="0.75" fill="none"/><rect x="206" y="63" width="9.2" height="2" fill="#e81010"/><path d="M217.9 60.2 L219.5 61.8 L221.1 60.2" stroke="#d0d0d0" stroke-width="0.75" fill="none"/><path d="M222 79.0 L222 75.5 L225.5 75.5 M223.2 76.7 L225.5 79.0 M225.5 77.3 L225.5 79.0 L223.8 79.0" stroke="#bdbdbd" stroke-width="0.6" fill="none"/><line x1="227.6" y1="36" x2="227.6" y2="79.5" stroke="#4d4d4d" stroke-width="0.6"/><line x1="234" y1="40.3" x2="242" y2="40.3" stroke="#777" stroke-width="0.5"/><line x1="234" y1="42.6" x2="242" y2="42.6" stroke="#f0f0f0" stroke-width="1.0"/><line x1="234" y1="44.8" x2="242" y2="44.8" stroke="#777" stroke-width="0.5"/><line x1="247" y1="44.4" x2="254" y2="44.4" stroke="#dcdcdc" stroke-width="0.8"/><line x1="247" y1="46.4" x2="254" y2="46.4" stroke="#aaa" stroke-width="0.6"/><line x1="259" y1="45.5" x2="267" y2="45.5" stroke="#dcdcdc" stroke-width="0.8"/><line x1="259" y1="47.4" x2="267" y2="47.4" stroke="#cfcfcf" stroke-width="0.8"/><line x1="259.6" y1="49" x2="266.4" y2="49" stroke="#999" stroke-width="0.5"/><line x1="271.5" y1="40" x2="271.5" y2="50.5" stroke="#4d4d4d" stroke-width="0.6"/><g transform="rotate(-45 278.6 44)"><text x="275.2" y="45.8" font-size="5.2" font-weight="700" fill="#e6e6e6" font-family="Liberation Sans">ab</text></g><path d="M277.8 48.8 L283.6 43" stroke="#d8d8d8" stroke-width="0.7"/><path d="M285.4 44.2 L287 45.8 L288.6 44.2" stroke="#d0d0d0" stroke-width="0.75" fill="none"/><line x1="299.8" y1="39" x2="299.8" y2="67" stroke="#4d4d4d" stroke-width="0.6"/><text x="304.8" y="45" font-size="4.6" font-weight="700" fill="#e6e6e6" font-family="Liberation Sans">a</text><text x="307.8" y="44.8" font-size="5" font-weight="700" fill="#e6e6e6" font-family="Liberation Sans">b</text><text x="304.8" y="49" font-size="4.6" font-weight="700" fill="#e6e6e6" font-family="Liberation Sans">c</text><path d="M311 46.4 L308.4 48.4 M308.2 47 v1.6 h1.6" stroke="#3b8ad8" stroke-width="0.7" fill="none"/><line x1="234" y1="58.3" x2="242" y2="58.3" stroke="#dcdcdc" stroke-width="0.8"/><line x1="234" y1="60.2" x2="240.5" y2="60.2" stroke="#bbb" stroke-width="0.6"/><line x1="234" y1="61.8" x2="242" y2="61.8" stroke="#aaa" stroke-width="0.5"/><line x1="234" y1="63.5" x2="239.6" y2="63.5" stroke="#dcdcdc" stroke-width="0.8"/><line x1="247" y1="58.3" x2="255" y2="58.3" stroke="#dcdcdc" stroke-width="0.8"/><line x1="248.5" y1="60.2" x2="253.5" y2="60.2" stroke="#bbb" stroke-width="0.6"/><line x1="247.4" y1="61.8" x2="254.6" y2="61.8" stroke="#aaa" stroke-width="0.5"/><line x1="248.5" y1="63.5" x2="253.5" y2="63.5" stroke="#dcdcdc" stroke-width="0.8"/><line x1="259" y1="58.3" x2="267" y2="58.3" stroke="#dcdcdc" stroke-width="0.8"/><line x1="260.5" y1="60.2" x2="267" y2="60.2" stroke="#bbb" stroke-width="0.6"/><line x1="259.4" y1="61.8" x2="267" y2="61.8" stroke="#aaa" stroke-width="0.5"/><line x1="261.8" y1="63.5" x2="267" y2="63.5" stroke="#dcdcdc" stroke-width="0.8"/><line x1="271.5" y1="56" x2="271.5" y2="66.5" stroke="#4d4d4d" stroke-width="0.6"/><line x1="275" y1="57.6" x2="283" y2="57.6" stroke="#dcdcdc" stroke-width="0.8"/><line x1="279" y1="59.5" x2="283" y2="59.5" stroke="#999" stroke-width="0.6"/><line x1="279" y1="61.2" x2="283" y2="61.2" stroke="#999" stroke-width="0.6"/><line x1="275" y1="63.2" x2="283" y2="63.2" stroke="#dcdcdc" stroke-width="0.8"/><path d="M279.2 60.3 h-2.6" stroke="#3b8ad8" stroke-width="1.0"/><path d="M277.4 58.6 L275 60.3 L277.4 62 Z" fill="#3b8ad8"/><line x1="287.5" y1="57.6" x2="296" y2="57.6" stroke="#dcdcdc" stroke-width="0.8"/><line x1="291.5" y1="59.5" x2="296" y2="59.5" stroke="#999" stroke-width="0.6"/><line x1="291.5" y1="61.2" x2="296" y2="61.2" stroke="#999" stroke-width="0.6"/><line x1="287.5" y1="63.2" x2="296" y2="63.2" stroke="#dcdcdc" stroke-width="0.8"/><path d="M287.6 60.3 h2.6" stroke="#3b8ad8" stroke-width="1.0"/><path d="M289.4 58.6 L291.8 60.3 L289.4 62 Z" fill="#3b8ad8"/><rect x="304.2" y="57" width="7.2" height="7.8" fill="#eeeeee"/><path d="M304.2 59.2 h7.2 M304.2 62.8 h7.2 M307.8 57 v2.2 M307.8 62.8 v2" stroke="#555" stroke-width="0.45"/><path d="M305.4 61 h4.8" stroke="#2f7fd6" stroke-width="1.0"/><path d="M306.2 60 L305 61 L306.2 62 Z M309.4 60 L310.6 61 L309.4 62 Z" fill="#2f7fd6"/><path d="M419.4 60.7 L421 62.3 L422.6 60.7" stroke="#d0d0d0" stroke-width="0.75" fill="none"/><path d="M426 79.0 L426 75.5 L429.5 75.5 M427.2 76.7 L429.5 79.0 M429.5 77.3 L429.5 79.0 L427.8 79.0" stroke="#bdbdbd" stroke-width="0.6" fill="none"/><line x1="431.6" y1="36" x2="431.6" y2="79.5" stroke="#4d4d4d" stroke-width="0.6"/><path d="M503.1 43.9 L505.9 43.9 L504.5 45.8 Z" fill="#cfcfcf"/><rect x="437.2" y="57" width="8.6" height="4.4" fill="#2f7fd6"/><ellipse cx="441.5" cy="59.2" rx="2" ry="1.3" fill="#e6e6e6"/><rect x="441" y="61.8" width="4.6" height="2.6" fill="#d8a84a"/><rect x="439" y="63" width="3" height="1.2" fill="#d8a84a"/><path d="M449.4 60.2 L451 61.8 L452.6 60.2" stroke="#d0d0d0" stroke-width="0.75" fill="none"/><line x1="482.5" y1="56" x2="482.5" y2="66.5" stroke="#4d4d4d" stroke-width="0.6"/><path d="M486.6 57.4 L488.6 59.6 M486.4 59 v-1.6 h1.6" stroke="#3b8ad8" stroke-width="0.8" fill="none"/><path d="M501.4 61.8 L499.4 64 M499.2 62.6 v1.6 h1.6" stroke="#3b8ad8" stroke-width="0.8" fill="none"/><path d="M508 79.0 L508 75.5 L511.5 75.5 M509.2 76.7 L511.5 79.0 M511.5 77.3 L511.5 79.0 L509.8 79.0" stroke="#bdbdbd" stroke-width="0.6" fill="none"/><line x1="513" y1="36" x2="513" y2="79.5" stroke="#4d4d4d" stroke-width="0.6"/><rect x="539.2" y="37.6" width="14.2" height="13" fill="#f0f0f0"/><path d="M542.8 37.6 v13 M546.4 37.6 v13 M550 37.6 v13 M539.2 40.85 h14.2 M539.2 44.1 h14.2 M539.2 47.35 h14.2" stroke="#c0c0c0" stroke-width="0.4"/><rect x="543" y="37.8" width="3" height="3" fill="#e0462a"/><rect x="543" y="41.05" width="6.4" height="3" fill="#2f7fd6"/><rect x="543" y="44.3" width="5" height="3" fill="#e0462a"/><rect x="543" y="47.55" width="2" height="3" fill="#2f7fd6"/><rect x="546.6" y="46.2" width="8.2" height="6.8" fill="#eeeeee" stroke="#666" stroke-width="0.5"/><path d="M548.8 48.8 h3.8 M548.8 50.6 h3.8 M552 47.4 L549.4 52" stroke="#333" stroke-width="0.6"/><path d="M570.2 66.4 L571.5 68.0 L572.8 66.4" stroke="#d0d0d0" stroke-width="0.75" fill="none"/><rect x="592.8" y="38.9" width="12.8" height="10.2" fill="#f0f0f0"/><rect x="596.4" y="41.5" width="9.2" height="7.6" fill="#b4cce4"/><path d="M596.4 38.9 v10.2 M599.5 38.9 v10.2 M602.5999999999999 38.9 v10.2 M592.8 41.199999999999996 h12.8 M592.8 44.0 h12.8 M592.8 46.6 h12.8" stroke="#9a9a9a" stroke-width="0.45"/><path d="M608.0 42.1 L602.5999999999999 48.3" stroke="#7a7a7a" stroke-width="2.0"/><path d="M596.4 52.9 L600.4 48.5 L603.4 50.5 Q601.8 53.099999999999994 596.4 52.9 Z" fill="#2f7fd6"/><path d="M615.7 66.4 L617 68.0 L618.3 66.4" stroke="#d0d0d0" stroke-width="0.75" fill="none"/><rect x="629.2" y="38" width="13" height="10.6" fill="#f0f0f0"/><rect x="632.2" y="40.8" width="8" height="5.2" fill="#b4cce4"/><path d="M631.8000000000001 38 v10.6 M640.4000000000001 38 v10.6 M629.2 40.4 h13 M629.2 46.4 h13" stroke="#9a9a9a" stroke-width="0.45"/><path d="M644.4000000000001 41.2 L639.0 47.4" stroke="#7a7a7a" stroke-width="2.0"/><path d="M632.8000000000001 52 L636.8000000000001 47.6 L639.8000000000001 49.6 Q638.2 52.2 632.8000000000001 52 Z" fill="#2f7fd6"/><path d="M642.7 66.4 L644 68.0 L645.3 66.4" stroke="#d0d0d0" stroke-width="0.75" fill="none"/><line x1="651.5" y1="36" x2="651.5" y2="79.5" stroke="#4d4d4d" stroke-width="0.6"/><rect x="663" y="37.5" width="8" height="2.6" fill="#e6e6e6"/><rect x="663" y="46.1" width="8" height="6" fill="#e6e6e6"/><path d="M663 49.1 h8 M667 46.1 v6" stroke="#888" stroke-width="0.4"/><rect x="669" y="42" width="7.6" height="3" fill="#a9c4e0"/><path d="M667.2 43.5 h-3.4 M665 42.4 L663.8 43.5 L665 44.6" stroke="#3b8ad8" stroke-width="0.7" fill="none"/><path d="M667.9 65.8 L669.5 67.39999999999999 L671.1 65.8" stroke="#d0d0d0" stroke-width="0.75" fill="none"/><rect x="689" y="37.5" width="8" height="2.6" fill="#e6e6e6"/><rect x="689" y="46.1" width="8" height="6" fill="#e6e6e6"/><path d="M689 49.1 h8 M693 46.1 v6" stroke="#888" stroke-width="0.4"/><rect x="692" y="42" width="7" height="3" fill="#a9c4e0"/><path d="M697.2 40.4 L703.6 46.8 M703.6 40.4 L697.2 46.8" stroke="#e0462a" stroke-width="0.9"/><path d="M694.4 65.8 L696 67.39999999999999 L697.6 65.8" stroke="#d0d0d0" stroke-width="0.75" fill="none"/><path d="M714.2 37.6 h13.4 M715.6 36.5 L714.2 37.6 L715.6 38.7 M726.2 36.5 L727.6 37.6 L726.2 38.7" stroke="#3b8ad8" stroke-width="0.6" fill="none"/><rect x="715" y="40" width="14" height="12" fill="#e6e6e6"/><rect x="719" y="41.5" width="3.2" height="6" fill="#2f7fd6"/><path d="M718.5 40 v12 M722.5 40 v12 M726 40 v12 M715 49.6 h14" stroke="#999" stroke-width="0.4"/><path d="M719.9 65.8 L721.5 67.39999999999999 L723.1 65.8" stroke="#d0d0d0" stroke-width="0.75" fill="none"/><line x1="738.6" y1="36" x2="738.6" y2="79.5" stroke="#4d4d4d" stroke-width="0.6"/><path d="M752 37.4 h-7.6 l4 3.4 l-4 3.4 h7.6" fill="none" stroke="#e6e6e6" stroke-width="0.9"/><path d="M794.5 39.7 L797.5 39.7 L796 41.6 Z" fill="#cfcfcf"/><rect x="745" y="48" width="7.2" height="7.2" fill="#e6e6e6"/><path d="M748.6 49.2 v4.4 M746.8 52 L748.6 53.8 L750.4 52" stroke="#2f7fd6" stroke-width="0.9" fill="none"/><path d="M787.4 52.2 L789 53.8 L790.6 52.2" stroke="#d0d0d0" stroke-width="0.75" fill="none"/><path d="M745 65 L749.6 60.6 L752 63 L747.4 67.4 Z" fill="#e7567a"/><path d="M783.9 64.2 L785.5 65.8 L787.1 64.2" stroke="#d0d0d0" stroke-width="0.75" fill="none"/><path d="M819.6 41.6 h8.6 l-3.4 3.8 v4 l-1.8 -1 v-3 z" fill="#9a9a9a"/><path d="M833.7 66.60000000000001 L835 68.2 L836.3 66.60000000000001" stroke="#d0d0d0" stroke-width="0.75" fill="none"/><path d="M854 46.4 L850.6 50.8" stroke="#2f7fd6" stroke-width="1.6" stroke-linecap="round"/><circle cx="857" cy="42.8" r="4.2" fill="#e6e6e6" stroke="#2f7fd6" stroke-width="1.0"/><path d="M870.7 66.60000000000001 L872 68.2 L873.3 66.60000000000001" stroke="#d0d0d0" stroke-width="0.75" fill="none"/><line x1="878.6" y1="36" x2="878.6" y2="79.5" stroke="#4d4d4d" stroke-width="0.6"/><circle cx="901" cy="44.6" r="2.8" fill="#f29500"/><line x1="925" y1="36" x2="925" y2="79.5" stroke="#4d4d4d" stroke-width="0.6"/><path d="M991 79.2 L993 77.4 L995 79.2" stroke="#cfcfcf" stroke-width="0.6" fill="none"/><path d="M48.6 92.4 h3.6 l-1.8 2 z" fill="#e0e0e0"/><circle cx="63.5" cy="91.6" r="0.5" fill="#cfcfcf"/><circle cx="63.5" cy="93.8" r="0.5" fill="#cfcfcf"/><circle cx="63.5" cy="96" r="0.5" fill="#cfcfcf"/><path d="M78.8 91.4 L83.4 96 M83.4 91.4 L78.8 96" stroke="#707070" stroke-width="0.8"/><path d="M97.4 93.6 L99.4 95.8 L102.8 91.2" stroke="#707070" stroke-width="0.8" fill="none"/><path d="M991 92.4 L993 94.2 L995 92.4" stroke="#cfcfcf" stroke-width="0.7" fill="none"/><path d="M992.6 112.2 L994.5 109.8 L996.4 112.2 Z" fill="#e0e0e0"/><path d="M992.6 511.4 L994.5 513.8 L996.4 511.4 Z" fill="#e0e0e0"/><path d="M17 521.4 L15 523.3 L17 525.2 Z" fill="#8a8a8a"/><path d="M29.4 521.4 L31.4 523.3 L29.4 525.2 Z" fill="#8a8a8a"/><line x1="156.2" y1="519" x2="156.2" y2="527" stroke="#6a6a6a" stroke-width="0.6"/><line x1="188.2" y1="519" x2="188.2" y2="527" stroke="#6a6a6a" stroke-width="0.6"/><line x1="224.3" y1="519" x2="224.3" y2="527" stroke="#6a6a6a" stroke-width="0.6"/><line x1="263.8" y1="519" x2="263.8" y2="527" stroke="#6a6a6a" stroke-width="0.6"/><line x1="284.5" y1="519" x2="284.5" y2="527" stroke="#6a6a6a" stroke-width="0.6"/><line x1="315.5" y1="519" x2="315.5" y2="527" stroke="#6a6a6a" stroke-width="0.6"/><line x1="346" y1="519" x2="346" y2="527" stroke="#6a6a6a" stroke-width="0.6"/><line x1="397.5" y1="519" x2="397.5" y2="527" stroke="#6a6a6a" stroke-width="0.6"/><circle cx="419" cy="523" r="3.2" fill="none" stroke="#e6e6e6" stroke-width="0.7"/><path d="M417.2 523 h3.6 M419 521.2 v3.6" stroke="#e6e6e6" stroke-width="0.7"/><circle cx="600.7" cy="520.8" r="0.45" fill="#cfcfcf"/><circle cx="600.7" cy="523" r="0.45" fill="#cfcfcf"/><circle cx="600.7" cy="525.2" r="0.45" fill="#cfcfcf"/><path d="M613.4 521.4 L611.4 523.2 L613.4 525 Z" fill="#e0e0e0"/><path d="M984.2 521.4 L986.2 523.2 L984.2 525 Z" fill="#e0e0e0"/><circle cx="38" cy="535.6" r="2.4" fill="none" stroke="#e0e0e0" stroke-width="0.7"/><path d="M37 537.6 l2.6 2.8 M40.2 537.4 l2.4 2.6 l-1.2 0.4" stroke="#e0e0e0" stroke-width="0.7" fill="none"/><rect x="848.6" y="533" width="7.6" height="6.2" fill="none" stroke="#e0e0e0" stroke-width="0.6"/><path d="M851.1 533 v6.2 M853.6 533 v6.2 M848.6 535 h7.6 M848.6 537.1 h7.6" stroke="#e0e0e0" stroke-width="0.5"/><rect x="870.4" y="533.4" width="6.6" height="5.8" fill="none" stroke="#cfcfcf" stroke-width="0.6"/><path d="M872.6 535 v4 M874.8 535 v4" stroke="#cfcfcf" stroke-width="0.4"/><rect x="890.4" y="533" width="7" height="6.4" fill="none" stroke="#cfcfcf" stroke-width="0.6"/><rect x="890.6" y="533.2" width="4.2" height="3.6" fill="#cfcfcf"/><path d="M908 536.6 h2.4 M970 536.6 h3 M971.5 535.1 v3" stroke="#9a9a9a" stroke-width="0.6"/><line x1="913.6" y1="536.6" x2="967.6" y2="536.6" stroke="#cfcfcf" stroke-width="0.7"/><rect x="940" y="533.8" width="1.8" height="5.4" fill="#e6e6e6"/><path d="M8.3 548.4 l3.8 -0.5 v4.2 h-3.8 z M12.8 547.8 l4.8 -0.7 v5 h-4.8 z M8.3 552.8 h3.8 v4.2 l-3.8 -0.5 z M12.8 552.8 h4.8 v5 l-4.8 -0.7 z" fill="#f2f2f2"/><circle cx="37.4" cy="550.6" r="2.9" fill="none" stroke="#e6e6e6" stroke-width="0.8"/><path d="M35.4 552.8 L31.6 556.8" stroke="#e6e6e6" stroke-width="0.9"/><ellipse cx="189" cy="551" rx="5.6" ry="3.6" fill="#e8e8e8" stroke="#d0303a" stroke-width="0.8"/><path d="M186 549 q3 2 7 0" stroke="#aaa" stroke-width="0.5" fill="none"/><circle cx="189.8" cy="556.6" r="1.3" fill="none" stroke="#2f8ae0" stroke-width="0.8"/><circle cx="193.6" cy="555.4" r="1.3" fill="none" stroke="#2f8ae0" stroke-width="0.8"/><path d="M209 547.4 h4.4 l1.2 1.4 h5.8 v8.4 h-11.4 z" fill="#f7c948"/><rect x="209" y="550" width="11.4" height="7.2" fill="#ffd75e"/><rect x="212.6" y="552.4" width="4.8" height="4.8" fill="#2f7fd6"/><rect x="213.6" y="553.6" width="2.8" height="2" fill="#ffd75e"/><path d="M234.2 553.6 a6.2 6.2 0 1 1 11.6 2.4 h-6 a3 3 0 0 0 -2 -3 z" fill="#2fb2e8"/><path d="M240 547.4 a6.2 6.2 0 0 1 6 6 h-4 z" fill="#49c56b"/><path d="M234.2 553.6 q0.6 5.4 6.4 5.4 a6 6 0 0 0 4.4 -2 h-4.8 a3.2 3.2 0 0 1 -2.4 -3.4 z" fill="#1a6fd0"/><rect x="235" y="554.4" width="6" height="3.8" fill="#d39a1a"/><circle cx="264.3" cy="552.6" r="5.6" fill="#ff6a2a"/><circle cx="264.2" cy="553" r="3.8" fill="#ff9a2a"/><circle cx="264" cy="553.4" r="2.6" fill="#6b3fd0"/><path d="M266 546.2 q4 1.6 4.2 5.4 q-1.2 -2.4 -3.4 -2.6 z" fill="#ffd23a"/><rect x="365" y="547" width="9.2" height="10" rx="0.6" fill="#1f7a45"/><rect x="368.6" y="548.6" width="5.6" height="6.8" fill="#33a066"/><rect x="362.2" y="549" width="6.6" height="6.6" fill="#107c41"/><path d="M364 550.6 l3 3.4 M367 550.6 l-3 3.4" stroke="#fff" stroke-width="0.8"/><path d="M697 552 h8 M703 550 l2 2 l-2 2 M699 552 l2 -2.6 h1.4 M700 552 l2 2.6 h1.4" stroke="#f2f2f2" stroke-width="0.8" fill="none"/><rect x="709" y="548" width="8.6" height="8.8" fill="#2b86e8"/><path d="M710.4 550.2 l1.2 4.6 l1.6 -3.4 l1.6 3.4 l1.2 -4.6" stroke="#fff" stroke-width="0.6" fill="none"/><rect x="721" y="548" width="8.4" height="8.6" fill="#1e1e1e"/><path d="M722.6 553 q3 -3.4 6 0 q-3 2.6 -6 0 z" fill="#76b900"/><rect x="734" y="547.8" width="8.4" height="8.8" fill="#7a7470"/><circle cx="738.4" cy="551.6" r="1.8" fill="#ddd"/><rect x="734.6" y="554" width="2" height="2" fill="#e02020"/><circle cx="741" cy="555.2" r="1.3" fill="#fff"/><rect x="748.4" y="548.6" width="6" height="7.4" rx="1" fill="none" stroke="#f2f2f2" stroke-width="0.7"/><circle cx="751.4" cy="552.6" r="1.6" fill="none" stroke="#f2f2f2" stroke-width="0.6"/><path d="M759.6 552.4 l7.6 -3.4 l-1.6 7.2 l-2.4 -2 z" fill="#f2f2f2"/><rect x="760" y="554.4" width="1.8" height="1.8" fill="#e02020"/><path d="M771.8 555.6 v-2.4 a4 4 0 0 1 8 0 v2.4" stroke="#cfcfcf" stroke-width="0.7" fill="none"/><circle cx="775.8" cy="552.8" r="4.6" fill="none" stroke="#8a8a8a" stroke-width="0.5"/><path d="M785.4 549.4 h2.4 v2.4 M790.6 549.4 h-1.6 v1.6 M785.4 555.6 h2 v-2 M790.6 555.6 h-2 v-2" stroke="#e0e0e0" stroke-width="0.8" fill="none"/><circle cx="799" cy="554" r="2.6" fill="#e02030"/><path d="M797 549 h2 v2 M801 549 h2 v2" stroke="#f2f2f2" stroke-width="0.9"/><rect x="809" y="547.6" width="8.6" height="9.4" fill="#3a9ad9"/><path d="M810.6 553 l2.4 -3 l3 4" stroke="#e8f4ff" stroke-width="0.6" fill="none"/><rect x="809" y="556" width="8.6" height="1" fill="#d6b24a"/><rect x="823" y="547.6" width="4.4" height="8.8" rx="0.8" fill="none" stroke="#e0e0e0" stroke-width="0.7"/><rect x="826" y="550.6" width="3" height="3.4" fill="none" stroke="#e0e0e0" stroke-width="0.6"/><rect x="834.4" y="548" width="8" height="6.6" fill="#2a2a2a" stroke="#e0e0e0" stroke-width="0.6"/><ellipse cx="838.4" cy="551.2" rx="2.6" ry="2" fill="#2fae3f"/><path d="M835 556.6 h7" stroke="#e0e0e0" stroke-width="0.6"/><path d="M846.6 549 l4 -1.6 l4 1.6 v3 q0 3.4 -4 5 q-4 -1.6 -4 -5 z" fill="#f2f2f2"/><path d="M850.6 547.6 v9.4 M846.6 551.6 h8" stroke="#333" stroke-width="0.5"/><path d="M852.4 557 l2.4 -4 l2.4 4 z" fill="#f2c000"/><path d="M859.6 556 q3 -5 7.4 -6 M861.6 556.4 q2.2 -3.4 5.4 -4 M863.6 556.6 q1.4 -1.6 3.4 -2" stroke="#cfcfcf" stroke-width="0.6" fill="none"/><path d="M871.4 551 h8.6 l-1 5.4 h-7.4 z" fill="#9a9a9a"/><path d="M873.6 554 l1.8 1.8 l3.8 -4" stroke="#3cc24a" stroke-width="1.1" fill="none"/><rect x="884.6" y="548" width="7" height="7.6" fill="none" stroke="#e0e0e0" stroke-width="0.7"/><rect x="886" y="549.6" width="3.2" height="3" fill="none" stroke="#e0e0e0" stroke-width="0.5"/><circle cx="891" cy="556" r="1.6" fill="#f29500"/><rect x="897" y="550.4" width="7" height="3.8" fill="none" stroke="#f2f2f2" stroke-width="0.8"/><rect x="897.6" y="551" width="3.8" height="2.6" fill="#f2f2f2"/><rect x="904.2" y="551.4" width="1" height="1.8" fill="#f2f2f2"/><path d="M909.4 550.6 h1.6 l2.2 -2 v7.6 l-2.2 -2 h-1.6 z" fill="none" stroke="#f2f2f2" stroke-width="0.6"/><path d="M914.4 550.4 q1 2 0 4 M915.6 549.6 q1.6 2.8 0 5.6" stroke="#f2f2f2" stroke-width="0.5" fill="none"/><path d="M979 548.4 h9 v6.4 h-4 l-2 2 v-2 h-3 z" fill="#f2f2f2"/><path d="M980.6 550.4 h5.8 M980.6 552.4 h5.8" stroke="#3a3632" stroke-width="0.6"/></svg>
</body></html>
